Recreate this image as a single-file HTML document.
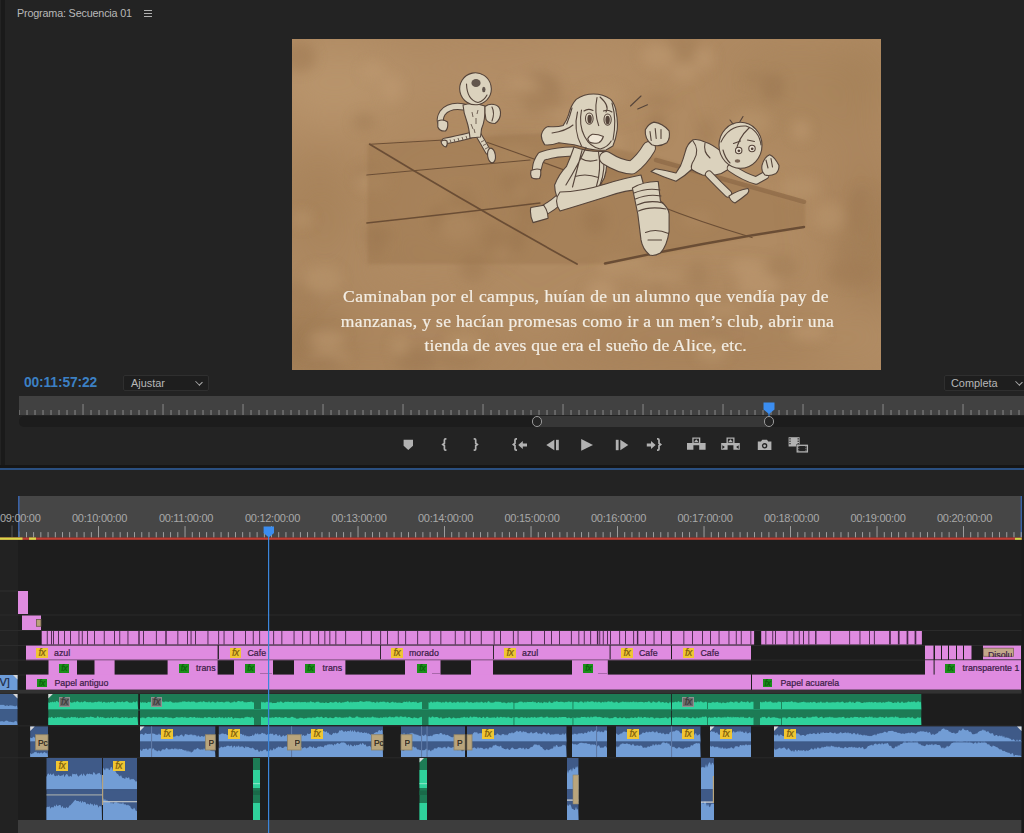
<!DOCTYPE html>
<html lang="es"><head><meta charset="utf-8"><title>Programa: Secuencia 01</title>
<style>
*{box-sizing:border-box;margin:0;padding:0}
html,body{width:1024px;height:833px;overflow:hidden;background:#232323}
body{position:relative;font-family:"Liberation Sans",sans-serif;color:#b4b4b4;font-size:11px}
.a{position:absolute}
#strip{left:1px;top:0;width:4px;height:466px;background:#1a1a1a}
#title{left:17px;top:6.8px;font-size:10.8px;color:#b9b9b9;white-space:nowrap;letter-spacing:-0.18px}
#burger{left:144px;top:10px;width:8px;height:7px}
#burger i{display:block;height:1px;background:#b0b0b0;margin-bottom:2px}
#frame{left:292px;top:39px;width:589px;height:331px;background:#ab8760;overflow:hidden}
#sub{left:0;top:246.4px;width:589px;text-align:center;font-family:"Liberation Serif",serif;color:#f3eee5;font-size:16.4px;line-height:24.3px;white-space:nowrap;-webkit-text-stroke:.2px}
#sub span{display:inline-block;transform:scaleX(1.07);transform-origin:50% 50%}
#tc{left:24px;top:375px;font-size:13.8px;font-weight:bold;color:#3c80c4;letter-spacing:-0.12px}
.dd{height:16px;background:#1e1e1e;border:1px solid #2f2f2f;border-radius:2px;color:#b8b8b8;font-size:10.9px;line-height:14px;white-space:nowrap}
#fit{left:123px;top:375px;width:86px;padding-left:7px}
#qual{left:944px;top:375px;width:90px;padding-left:6px}
.chev{position:absolute;top:3px;width:6px;height:6px;border-right:1.3px solid #b0b0b0;border-bottom:1.3px solid #b0b0b0;transform:rotate(45deg) scale(1,.8)}
#scrub{left:19px;top:396px;width:1005px;height:19px;background:#414141}
#zoombar{left:19px;top:416px;width:1010px;height:11px;background:#1c1c1c;border-radius:5px}
#zoomsel{left:537px;top:416px;width:232px;height:11px;background:#373737}
.ring{width:10.6px;height:10.6px;margin:.2px;border:1.9px solid #999;border-radius:50%;background:#242424}
#sep1{left:0;top:465px;width:1024px;height:3px;background:#161616}
#sep2{left:0;top:468px;width:1024px;height:1.7px;background:#2a4f80}

.tl{top:511.8px;width:59px;text-align:center;font-size:11px;color:#a9a9a9;white-space:nowrap;letter-spacing:-0.28px}
.fx{width:11.8px;height:9.8px;font-size:10px;line-height:9.4px;font-style:italic;text-align:center;letter-spacing:-0.4px;overflow:hidden;-webkit-text-stroke:.2px}
.cl{font-size:8.8px;line-height:12px;color:#3a1c45;white-space:nowrap;-webkit-text-stroke:.22px}
</style></head>
<body>
<div class="a" id="strip"></div>
<div class="a" id="title">Programa: Secuencia 01</div>
<div class="a" id="burger"><i></i><i></i><i></i></div>
<div class="a" id="frame"><svg class="a" style="left:0;top:0" width="589" height="331" viewBox="292 39 589 331"><defs><filter id="bl" x="-30%" y="-30%" width="160%" height="160%"><feGaussianBlur stdDeviation="20"/></filter><filter id="b2" x="-30%" y="-30%" width="160%" height="160%"><feGaussianBlur stdDeviation="6"/></filter><filter id="b4"><feGaussianBlur stdDeviation="1.6"/></filter><filter id="b3"><feGaussianBlur stdDeviation=".45"/></filter></defs><rect x="292" y="39" width="589" height="331" fill="#b08b63"/><g filter="url(#bl)"><ellipse cx="340" cy="80" rx="70" ry="40" fill="#b9956d" opacity="0.7"/><ellipse cx="520" cy="70" rx="120" ry="30" fill="#b5916a" opacity="0.6"/><ellipse cx="800" cy="90" rx="70" ry="50" fill="#a7835c" opacity="0.6"/><ellipse cx="860" cy="200" rx="40" ry="90" fill="#a6825a" opacity="0.6"/><ellipse cx="330" cy="250" rx="50" ry="70" fill="#ab875f" opacity="0.5"/><ellipse cx="420" cy="330" rx="90" ry="40" fill="#aa865e" opacity="0.6"/><ellipse cx="700" cy="330" rx="140" ry="40" fill="#a6825a" opacity="0.6"/><ellipse cx="310" cy="350" rx="40" ry="30" fill="#9e7b54" opacity="0.6"/><ellipse cx="600" cy="60" rx="60" ry="20" fill="#b8946c" opacity="0.5"/><ellipse cx="860" cy="340" rx="50" ry="40" fill="#b28e66" opacity="0.6"/><ellipse cx="450" cy="200" rx="40" ry="30" fill="#b8946c" opacity="0.4"/><ellipse cx="865" cy="75" rx="35" ry="40" fill="#9b7750" opacity="0.35"/><ellipse cx="872" cy="250" rx="25" ry="70" fill="#98744e" opacity="0.50"/><ellipse cx="300" cy="340" rx="45" ry="40" fill="#96724c" opacity="0.50"/><ellipse cx="590" cy="366" rx="300" ry="14" fill="#9b7750" opacity="0.45"/><ellipse cx="330" cy="90" rx="60" ry="40" fill="#ba966e" opacity="0.45"/><ellipse cx="315" cy="200" rx="40" ry="50" fill="#a07c55" opacity="0.45"/><ellipse cx="560" cy="44" rx="280" ry="8" fill="#a27e57" opacity="0.40"/></g><g filter="url(#b2)" opacity=".6"><ellipse cx="658" cy="282" rx="6" ry="10" fill="#9c7852"/><ellipse cx="845" cy="252" rx="8" ry="10" fill="#a07c55"/><ellipse cx="439" cy="218" rx="10" ry="13" fill="#9c7852"/><ellipse cx="533" cy="101" rx="9" ry="14" fill="#a37f58"/><ellipse cx="376" cy="242" rx="8" ry="16" fill="#a07c55"/><ellipse cx="298" cy="293" rx="20" ry="8" fill="#a07c55"/><ellipse cx="856" cy="217" rx="9" ry="16" fill="#a07c55"/><ellipse cx="410" cy="355" rx="11" ry="9" fill="#a37f58"/><ellipse cx="392" cy="89" rx="11" ry="14" fill="#bd9971"/><ellipse cx="637" cy="235" rx="7" ry="9" fill="#b8946c"/><ellipse cx="473" cy="268" rx="14" ry="13" fill="#a07c55"/><ellipse cx="328" cy="358" rx="21" ry="9" fill="#bd9971"/><ellipse cx="531" cy="220" rx="12" ry="11" fill="#a37f58"/><ellipse cx="300" cy="57" rx="16" ry="15" fill="#a07c55"/><ellipse cx="364" cy="122" rx="12" ry="9" fill="#a37f58"/><ellipse cx="601" cy="293" rx="15" ry="14" fill="#bd9971"/><ellipse cx="509" cy="138" rx="21" ry="6" fill="#a37f58"/><ellipse cx="494" cy="240" rx="11" ry="15" fill="#a07c55"/><ellipse cx="613" cy="143" rx="11" ry="14" fill="#b8946c"/><ellipse cx="660" cy="276" rx="22" ry="7" fill="#b8946c"/><ellipse cx="323" cy="362" rx="21" ry="5" fill="#9c7852"/><ellipse cx="727" cy="153" rx="13" ry="10" fill="#b8946c"/><ellipse cx="327" cy="339" rx="19" ry="9" fill="#bd9971"/><ellipse cx="416" cy="360" rx="21" ry="12" fill="#9c7852"/><ellipse cx="754" cy="77" rx="12" ry="6" fill="#a37f58"/><ellipse cx="540" cy="88" rx="20" ry="16" fill="#9c7852"/><ellipse cx="559" cy="200" rx="14" ry="8" fill="#b8946c"/><ellipse cx="530" cy="89" rx="19" ry="11" fill="#a37f58"/><ellipse cx="400" cy="346" rx="9" ry="10" fill="#b8946c"/><ellipse cx="595" cy="220" rx="12" ry="14" fill="#9c7852"/><ellipse cx="747" cy="267" rx="18" ry="9" fill="#bd9971"/><ellipse cx="706" cy="133" rx="10" ry="16" fill="#a37f58"/><ellipse cx="712" cy="352" rx="16" ry="11" fill="#b8946c"/><ellipse cx="302" cy="219" rx="11" ry="8" fill="#b8946c"/><ellipse cx="463" cy="204" rx="12" ry="12" fill="#b8946c"/><ellipse cx="725" cy="310" rx="21" ry="7" fill="#b8946c"/><ellipse cx="800" cy="188" rx="21" ry="11" fill="#b8946c"/><ellipse cx="604" cy="96" rx="21" ry="10" fill="#b8946c"/><ellipse cx="698" cy="275" rx="9" ry="14" fill="#a37f58"/><ellipse cx="634" cy="258" rx="11" ry="11" fill="#a37f58"/><ellipse cx="801" cy="130" rx="9" ry="11" fill="#bd9971"/><ellipse cx="659" cy="101" rx="16" ry="5" fill="#a07c55"/><ellipse cx="570" cy="115" rx="20" ry="6" fill="#bd9971"/><ellipse cx="859" cy="198" rx="7" ry="10" fill="#9c7852"/><ellipse cx="517" cy="240" rx="9" ry="13" fill="#9c7852"/><ellipse cx="513" cy="156" rx="20" ry="15" fill="#b8946c"/><ellipse cx="697" cy="219" rx="15" ry="8" fill="#bd9971"/><ellipse cx="467" cy="208" rx="11" ry="9" fill="#9c7852"/><ellipse cx="370" cy="175" rx="16" ry="9" fill="#9c7852"/><ellipse cx="378" cy="235" rx="14" ry="7" fill="#9c7852"/><ellipse cx="373" cy="71" rx="12" ry="9" fill="#bd9971"/><ellipse cx="829" cy="217" rx="16" ry="15" fill="#b8946c"/><ellipse cx="514" cy="182" rx="14" ry="10" fill="#a07c55"/><ellipse cx="708" cy="166" rx="16" ry="8" fill="#a07c55"/><ellipse cx="867" cy="203" rx="6" ry="15" fill="#a37f58"/><ellipse cx="474" cy="343" rx="14" ry="6" fill="#a07c55"/><ellipse cx="657" cy="186" rx="7" ry="7" fill="#b8946c"/><ellipse cx="524" cy="198" rx="10" ry="15" fill="#9c7852"/><ellipse cx="751" cy="122" rx="20" ry="13" fill="#b8946c"/><ellipse cx="462" cy="201" rx="14" ry="14" fill="#a37f58"/><ellipse cx="808" cy="332" rx="18" ry="8" fill="#bd9971"/><ellipse cx="606" cy="151" rx="18" ry="5" fill="#b8946c"/><ellipse cx="499" cy="263" rx="8" ry="5" fill="#9c7852"/><ellipse cx="618" cy="264" rx="20" ry="11" fill="#bd9971"/><ellipse cx="303" cy="294" rx="16" ry="13" fill="#a37f58"/><ellipse cx="851" cy="252" rx="14" ry="13" fill="#a37f58"/><ellipse cx="715" cy="333" rx="19" ry="6" fill="#a37f58"/><ellipse cx="783" cy="267" rx="15" ry="12" fill="#a37f58"/><ellipse cx="570" cy="143" rx="14" ry="11" fill="#a07c55"/><ellipse cx="585" cy="149" rx="13" ry="11" fill="#a07c55"/><ellipse cx="323" cy="279" rx="19" ry="14" fill="#b8946c"/><ellipse cx="682" cy="50" rx="22" ry="16" fill="#a37f58"/><ellipse cx="704" cy="58" rx="10" ry="12" fill="#bd9971"/><ellipse cx="850" cy="273" rx="22" ry="13" fill="#a07c55"/><ellipse cx="550" cy="101" rx="13" ry="7" fill="#a07c55"/><ellipse cx="658" cy="56" rx="17" ry="13" fill="#bd9971"/><ellipse cx="458" cy="227" rx="18" ry="15" fill="#bd9971"/><ellipse cx="373" cy="182" rx="17" ry="10" fill="#b8946c"/><ellipse cx="501" cy="255" rx="8" ry="8" fill="#bd9971"/><ellipse cx="627" cy="262" rx="21" ry="11" fill="#b8946c"/><ellipse cx="657" cy="127" rx="10" ry="14" fill="#9c7852"/><ellipse cx="460" cy="358" rx="20" ry="10" fill="#a07c55"/><ellipse cx="522" cy="85" rx="16" ry="6" fill="#bd9971"/><ellipse cx="684" cy="72" rx="14" ry="10" fill="#bd9971"/><ellipse cx="522" cy="192" rx="8" ry="11" fill="#b8946c"/><ellipse cx="611" cy="167" rx="21" ry="10" fill="#a07c55"/><ellipse cx="758" cy="285" rx="22" ry="12" fill="#bd9971"/><ellipse cx="773" cy="87" rx="12" ry="14" fill="#9c7852"/><ellipse cx="464" cy="343" rx="19" ry="9" fill="#b8946c"/><ellipse cx="716" cy="158" rx="19" ry="10" fill="#b8946c"/></g><path d="M367.5 144.3L544 133L654 157L805 201.8L805 226L605.5 264L367.5 264Z" fill="#9a744d" opacity=".43" filter="url(#b4)"/><g fill="none" stroke="#6b4e35" stroke-linecap="round" filter="url(#b3)"><path d="M369.7 144.3Q470 205 577 264" stroke-width="1.8"/><path d="M605 263.5Q700 243 804 227" stroke-width="2.5"/><path d="M366.8 175Q440 168 530 160" stroke-width="1.2"/><path d="M366.8 223Q450 214 540 203" stroke-width="1.3"/><path d="M487.6 142.5Q560 168 612 188M660 206Q700 222 752 237.5" stroke-width="1.3"/><path d="M369.7 144.3L470 138.5" stroke-width="1"/><path d="M656 160Q730 181 804 201.8" stroke-width="4.5" stroke="#8c6846" opacity=".7"/></g><g><path d="M470 135.5Q456 139 445 141" fill="none" stroke="#55443a" stroke-width="6.8" stroke-linecap="round" stroke-linejoin="round"/><path d="M470 135.5Q456 139 445 141" fill="none" stroke="#dbd2bd" stroke-width="4.8" stroke-linecap="round" stroke-linejoin="round"/><path d="M441 141.5Q444 139 447 141Q448 145 446 147Q442 146 441 141.5Z" fill="#dbd2bd" stroke="#55443a" stroke-width="1.1" stroke-linejoin="round" stroke-linecap="round"/><path d="M478.5 135Q484 144 488 151.5" fill="none" stroke="#55443a" stroke-width="6.4" stroke-linecap="round" stroke-linejoin="round"/><path d="M478.5 135Q484 144 488 151.5" fill="none" stroke="#dbd2bd" stroke-width="4.4" stroke-linecap="round" stroke-linejoin="round"/><ellipse cx="491.5" cy="155.5" rx="3.9" ry="7.4" transform="rotate(-8 491.5 155.5)" fill="#dbd2bd" stroke="#55443a" stroke-width="1.1" stroke-linejoin="round" stroke-linecap="round"/><path d="M464 107Q449 104.5 442.5 113Q439.5 118 440.5 122" fill="none" stroke="#55443a" stroke-width="7.2" stroke-linecap="round" stroke-linejoin="round"/><path d="M464 107Q449 104.5 442.5 113Q439.5 118 440.5 122" fill="none" stroke="#dbd2bd" stroke-width="5.2" stroke-linecap="round" stroke-linejoin="round"/><path d="M437.8 121Q443 118.5 447.6 122Q448.5 128 445.5 131Q439.5 131.5 437.8 127Z" fill="#dbd2bd" stroke="#55443a" stroke-width="1.1" stroke-linejoin="round" stroke-linecap="round"/><path d="M463 105Q473 102 485 106Q485.5 120 481.5 129Q481 134 480.5 137L470 138Q469 128 467 122Q463.5 113 463 105Z" fill="#dbd2bd" stroke="#55443a" stroke-width="1.1" stroke-linejoin="round" stroke-linecap="round"/><path d="M472 112l1 5M476 118l0 6M471 124l2 5M478 110l-1 4M474 129l1 4" fill="none" stroke="#55443a" stroke-width=".8"/><path d="M485 106.5Q489 103.5 494 104.5Q500 105.5 500.5 112Q501 119.5 495 123.5Q488.5 123.5 486 119.5Q484.5 113 485 106.5Z" fill="#dbd2bd" stroke="#55443a" stroke-width="1.1" stroke-linejoin="round" stroke-linecap="round"/><path d="M492 107Q495 113 492 121" fill="none" stroke="#55443a" stroke-width="1.1" stroke-linejoin="round" stroke-linecap="round"/><ellipse cx="475.5" cy="88.8" rx="15.8" ry="16" transform="rotate(-12 475.5 88.8)" fill="#dbd2bd" stroke="#55443a" stroke-width="1.1" stroke-linejoin="round" stroke-linecap="round"/><ellipse cx="476" cy="83" rx="4.6" ry="4" fill="#62564d"/><ellipse cx="483.8" cy="89.5" rx="1.7" ry="2.8" fill="#62564d"/><path d="M466.5 84Q467 100 478 102.5Q484 101 487 95" fill="none" stroke="#55443a" stroke-width="1.1" stroke-linejoin="round" stroke-linecap="round"/><path d="M450 139.5l1 3M454 139l1 3M458 138l1 3M462 137l1 3M466 136l1 3M481 142l3-1.5M483 145.5l3-1.5M485 149l3-1.5" stroke="#55443a" stroke-width=".8" fill="none"/></g><g><path d="M721.3 151.6Q712 144 705.6 142.2Q698 138.5 693.1 139.8Q687 144 685.3 151.6Q683 160 680.6 165.6L676 173Q665 170 655.6 168.8L651 171.5Q663 177 676 181.3Q685 176 691.6 169.5Q697 173 702.5 175Q713 176 721.3 173.4L731.5 167.5Q728 158 721.3 151.6Z" fill="#dbd2bd" stroke="#55443a" stroke-width="1.1" stroke-linejoin="round" stroke-linecap="round"/><path d="M693 141Q700 150 694 160Q690 166 692 170M705 143Q703 152 710 158" fill="none" stroke="#55443a" stroke-width="1.1" stroke-linejoin="round" stroke-linecap="round"/><path d="M709 174.5Q719 185 728 193.5" fill="none" stroke="#55443a" stroke-width="8.0" stroke-linecap="round" stroke-linejoin="round"/><path d="M709 174.5Q719 185 728 193.5" fill="none" stroke="#dbd2bd" stroke-width="6.0" stroke-linecap="round" stroke-linejoin="round"/><path d="M729 196Q738 190 748 188.5Q750 191 747 194Q741 199 735 203Q730 201 729 196Z" fill="#dbd2bd" stroke="#55443a" stroke-width="1.1" stroke-linejoin="round" stroke-linecap="round"/><path d="M731 168Q744 177 756 180.5L765 175.5" fill="none" stroke="#55443a" stroke-width="8.5" stroke-linecap="round" stroke-linejoin="round"/><path d="M731 168Q744 177 756 180.5L765 175.5" fill="none" stroke="#dbd2bd" stroke-width="6.5" stroke-linecap="round" stroke-linejoin="round"/><path d="M761.9 165.6Q764 157 769.7 154.7Q775 157 779 165.6Q779 171 776 173.4Q770 176.5 765 175Q761 171 761.9 165.6Z" fill="#dbd2bd" stroke="#55443a" stroke-width="1.1" stroke-linejoin="round" stroke-linecap="round"/><path d="M766 160l2 8M771 158.5l1.5 8.5" fill="none" stroke="#55443a" stroke-width="1.1" stroke-linejoin="round" stroke-linecap="round"/><ellipse cx="740.5" cy="145.3" rx="21.5" ry="23" fill="#dbd2bd" stroke="#55443a" stroke-width="1.1" stroke-linejoin="round" stroke-linecap="round"/><path d="M721 142Q729 125 746 126Q759 130 761 145M749 128Q738 138 736 152M730 120l3 4M743 116.5l-3 5M723 150Q725 158 730 163" fill="none" stroke="#55443a" stroke-width="1.1" stroke-linejoin="round" stroke-linecap="round"/><circle cx="738.7" cy="150.5" r="3.2" fill="#efe6d6" stroke="#55443a" stroke-width="1.1" stroke-linejoin="round" stroke-linecap="round"/><circle cx="738.9" cy="150.8" r="1.4" fill="#55443a"/><circle cx="752" cy="148.5" r="3.2" fill="#efe6d6" stroke="#55443a" stroke-width="1.1" stroke-linejoin="round" stroke-linecap="round"/><circle cx="752.2" cy="148.8" r="1.4" fill="#55443a"/><ellipse cx="737.5" cy="161" rx="2.8" ry="1.8" fill="#7b6656"/><path d="M733.5 143.5l7-2.5M747.5 140l7 1.5" fill="none" stroke="#55443a" stroke-width="1.1" stroke-linejoin="round" stroke-linecap="round"/></g><g><path d="M561 198Q552 206 543 211" fill="none" stroke="#55443a" stroke-width="11.0" stroke-linecap="round" stroke-linejoin="round"/><path d="M561 198Q552 206 543 211" fill="none" stroke="#dbd2bd" stroke-width="9.0" stroke-linecap="round" stroke-linejoin="round"/><path d="M530.8 207.5L543.8 205.3Q548 211 548.1 218.3L533 222.6Q529.5 215 530.8 207.5Z" fill="#dbd2bd" stroke="#55443a" stroke-width="1.1" stroke-linejoin="round" stroke-linecap="round"/><path d="M573 151.5Q553 152 541.5 156.5Q537.5 162 537 168" fill="none" stroke="#55443a" stroke-width="10.0" stroke-linecap="round" stroke-linejoin="round"/><path d="M573 151.5Q553 152 541.5 156.5Q537.5 162 537 168" fill="none" stroke="#dbd2bd" stroke-width="8.0" stroke-linecap="round" stroke-linejoin="round"/><path d="M531 170.5Q536 168 540.5 169.5Q541.5 175 539.5 178.5Q534 179.5 531.5 177.5Q530 174 531 170.5Z" fill="#dbd2bd" stroke="#55443a" stroke-width="1.1" stroke-linejoin="round" stroke-linecap="round"/><path d="M593.5 94Q603 94 610.8 99.4Q615.5 105 616.2 112.4Q618 121 617.2 129.7Q616 139 612.9 146L606 150Q593 151 582.7 147L574 144.8Q566 143.5 558.9 142.7Q551 145.5 544.8 144.8Q540.5 139 541.6 134Q543.5 128 548.1 126.5Q557 127.5 563.2 125.4Q567 120 568.6 114.6Q571 105 576.2 99.4Q584 94 593.5 94Z" fill="#dbd2bd" stroke="#55443a" stroke-width="1.1" stroke-linejoin="round" stroke-linecap="round"/><path d="M574 147Q590 152.5 605.3 151.3Q608.5 165 604.3 178Q600 186 595.6 190L562 204Q555 198 554.6 185Q559 174 566.5 166.4Q571 156 574 147Z" fill="#dbd2bd" stroke="#55443a" stroke-width="1.1" stroke-linejoin="round" stroke-linecap="round"/><path d="M586 147.4Q578 165 565.9 185M582 150.5L572.5 187M598.5 152Q601.5 170 596.5 186M603 152Q606 170 600 185M575 176.5Q586 173 598.5 177.5M580 158Q588 163 597 160" fill="none" stroke="#55443a" stroke-width="1.1" stroke-linejoin="round" stroke-linecap="round"/><path d="M560 192Q580 192 606.4 183.7Q625 178 641 175L645 190Q632 188 606.4 196.7Q580 205 560 211Q553 201 560 192Z" fill="#dbd2bd" stroke="#55443a" stroke-width="1.1" stroke-linejoin="round" stroke-linecap="round"/><path d="M632.4 188Q645 181 658.3 181.6L660.4 201Q669 208 669.1 214L669.1 231.3Q667 246 660.4 252.9Q654 256.5 649.6 255Q642.5 249 641 239.9L637.8 214Z" fill="#dbd2bd" stroke="#55443a" stroke-width="1.1" stroke-linejoin="round" stroke-linecap="round"/><path d="M634 193Q647 187.5 660 190M635.5 199Q648 193.5 661 196M637 205Q649 199.5 663 203M638.5 211Q650 206 666 209M648 240h13.5M645.5 232.5Q656 228 668.5 233.5" fill="none" stroke="#55443a" stroke-width="1.1" stroke-linejoin="round" stroke-linecap="round"/><path d="M606 158Q620 167 632 167.5Q642 160 649 148" fill="none" stroke="#55443a" stroke-width="14.0" stroke-linecap="round" stroke-linejoin="round"/><path d="M606 158Q620 167 632 167.5Q642 160 649 148" fill="none" stroke="#dbd2bd" stroke-width="12.0" stroke-linecap="round" stroke-linejoin="round"/><path d="M645.3 129.7Q648.5 123.5 654 122.1Q663 123.5 669.1 130.8Q670.5 138 666.9 142.7Q659 147.5 651.8 144.8Q644.5 139 645.3 129.7Z" fill="#dbd2bd" stroke="#55443a" stroke-width="1.1" stroke-linejoin="round" stroke-linecap="round"/><path d="M650 131.5l1.2 9M655.2 128.5l1 10M661 129.5l0 9" fill="none" stroke="#55443a" stroke-width="1.1" stroke-linejoin="round" stroke-linecap="round"/><path d="M597 97.5Q594 112 598.7 125.6M600 97Q610 106 606 112M581.5 110Q578.5 125 584.6 136.5Q590 147 600.2 149Q608 147 611.2 141M577.5 112Q573 130 581.5 146M573 125Q566 131 552 133M566.7 124Q570 116 572 108M612 103Q617 120 613 140" fill="none" stroke="#55443a" stroke-width="1.1" stroke-linejoin="round" stroke-linecap="round"/><ellipse cx="589.3" cy="118.6" rx="3.8" ry="5.6" fill="#e6dcc8" stroke="#55443a" stroke-width="1.1" stroke-linejoin="round" stroke-linecap="round"/><ellipse cx="607.6" cy="119.6" rx="3.6" ry="5.6" fill="#e6dcc8" stroke="#55443a" stroke-width="1.1" stroke-linejoin="round" stroke-linecap="round"/><ellipse cx="589.6" cy="119" rx="2.2" ry="4.2" fill="#55443a"/><ellipse cx="607.6" cy="120" rx="2.2" ry="4.2" fill="#55443a"/><path d="M584 111Q588 108 593 110.5M603.5 111Q608 109 612 112" fill="none" stroke="#55443a" stroke-width="1.1" stroke-linejoin="round" stroke-linecap="round"/><path d="M587.7 138.8Q589.5 135 592.4 134.2Q598 134 603.4 136.5Q602 141 598.7 142.7Q593 144 589.3 142Z" fill="#eee5d5" stroke="#55443a" stroke-width="1.1" stroke-linejoin="round" stroke-linecap="round"/><path d="M630.5 106L641 96M637.7 109L647.5 104.8" fill="none" stroke="#55443a" stroke-width="1.1" stroke-linejoin="round" stroke-linecap="round"/></g></svg><div class="a" id="sub"><span style="letter-spacing:.37px;margin-left:-1px">Caminaban por el campus, huían de un alumno que vendía pay de</span><br><span style="letter-spacing:.315px;margin-left:2.5px">manzanas, y se hacían promesas como ir a un men’s club, abrir una</span><br><span style="letter-spacing:.19px;margin-left:-2.5px">tienda de aves que era el sueño de Alice, etc.</span></div></div>
<div class="a" id="tc">00:11:57:22</div>
<div class="a dd" id="fit">Ajustar<span class="chev" style="left:72px"></span></div>
<div class="a dd" id="qual">Completa<span class="chev" style="left:71px"></span></div>
<div class="a" id="scrub"><svg width="1005" height="19" fill="#969696"><rect x="-16.40" y="8" width=".85" height="11"/><rect x="-8.40" y="14" width=".85" height="5"/><rect x="-0.40" y="14" width=".85" height="5"/><rect x="7.60" y="14" width=".85" height="5"/><rect x="15.60" y="14" width=".85" height="5"/><rect x="23.60" y="14" width=".85" height="5"/><rect x="31.60" y="14" width=".85" height="5"/><rect x="39.60" y="14" width=".85" height="5"/><rect x="47.60" y="14" width=".85" height="5"/><rect x="55.60" y="14" width=".85" height="5"/><rect x="63.60" y="8" width=".85" height="11"/><rect x="71.60" y="14" width=".85" height="5"/><rect x="79.60" y="14" width=".85" height="5"/><rect x="87.60" y="14" width=".85" height="5"/><rect x="95.60" y="14" width=".85" height="5"/><rect x="103.60" y="14" width=".85" height="5"/><rect x="111.60" y="14" width=".85" height="5"/><rect x="119.60" y="14" width=".85" height="5"/><rect x="127.60" y="14" width=".85" height="5"/><rect x="135.60" y="14" width=".85" height="5"/><rect x="143.60" y="8" width=".85" height="11"/><rect x="151.60" y="14" width=".85" height="5"/><rect x="159.60" y="14" width=".85" height="5"/><rect x="167.60" y="14" width=".85" height="5"/><rect x="175.60" y="14" width=".85" height="5"/><rect x="183.60" y="14" width=".85" height="5"/><rect x="191.60" y="14" width=".85" height="5"/><rect x="199.60" y="14" width=".85" height="5"/><rect x="207.60" y="14" width=".85" height="5"/><rect x="215.60" y="14" width=".85" height="5"/><rect x="223.60" y="8" width=".85" height="11"/><rect x="231.60" y="14" width=".85" height="5"/><rect x="239.60" y="14" width=".85" height="5"/><rect x="247.60" y="14" width=".85" height="5"/><rect x="255.60" y="14" width=".85" height="5"/><rect x="263.60" y="14" width=".85" height="5"/><rect x="271.60" y="14" width=".85" height="5"/><rect x="279.60" y="14" width=".85" height="5"/><rect x="287.60" y="14" width=".85" height="5"/><rect x="295.60" y="14" width=".85" height="5"/><rect x="303.60" y="8" width=".85" height="11"/><rect x="311.60" y="14" width=".85" height="5"/><rect x="319.60" y="14" width=".85" height="5"/><rect x="327.60" y="14" width=".85" height="5"/><rect x="335.60" y="14" width=".85" height="5"/><rect x="343.60" y="14" width=".85" height="5"/><rect x="351.60" y="14" width=".85" height="5"/><rect x="359.60" y="14" width=".85" height="5"/><rect x="367.60" y="14" width=".85" height="5"/><rect x="375.60" y="14" width=".85" height="5"/><rect x="383.60" y="8" width=".85" height="11"/><rect x="391.60" y="14" width=".85" height="5"/><rect x="399.60" y="14" width=".85" height="5"/><rect x="407.60" y="14" width=".85" height="5"/><rect x="415.60" y="14" width=".85" height="5"/><rect x="423.60" y="14" width=".85" height="5"/><rect x="431.60" y="14" width=".85" height="5"/><rect x="439.60" y="14" width=".85" height="5"/><rect x="447.60" y="14" width=".85" height="5"/><rect x="455.60" y="14" width=".85" height="5"/><rect x="463.60" y="8" width=".85" height="11"/><rect x="471.60" y="14" width=".85" height="5"/><rect x="479.60" y="14" width=".85" height="5"/><rect x="487.60" y="14" width=".85" height="5"/><rect x="495.60" y="14" width=".85" height="5"/><rect x="503.60" y="14" width=".85" height="5"/><rect x="511.60" y="14" width=".85" height="5"/><rect x="519.60" y="14" width=".85" height="5"/><rect x="527.60" y="14" width=".85" height="5"/><rect x="535.60" y="14" width=".85" height="5"/><rect x="543.60" y="8" width=".85" height="11"/><rect x="551.60" y="14" width=".85" height="5"/><rect x="559.60" y="14" width=".85" height="5"/><rect x="567.60" y="14" width=".85" height="5"/><rect x="575.60" y="14" width=".85" height="5"/><rect x="583.60" y="14" width=".85" height="5"/><rect x="591.60" y="14" width=".85" height="5"/><rect x="599.60" y="14" width=".85" height="5"/><rect x="607.60" y="14" width=".85" height="5"/><rect x="615.60" y="14" width=".85" height="5"/><rect x="623.60" y="8" width=".85" height="11"/><rect x="631.60" y="14" width=".85" height="5"/><rect x="639.60" y="14" width=".85" height="5"/><rect x="647.60" y="14" width=".85" height="5"/><rect x="655.60" y="14" width=".85" height="5"/><rect x="663.60" y="14" width=".85" height="5"/><rect x="671.60" y="14" width=".85" height="5"/><rect x="679.60" y="14" width=".85" height="5"/><rect x="687.60" y="14" width=".85" height="5"/><rect x="695.60" y="14" width=".85" height="5"/><rect x="703.60" y="8" width=".85" height="11"/><rect x="711.60" y="14" width=".85" height="5"/><rect x="719.60" y="14" width=".85" height="5"/><rect x="727.60" y="14" width=".85" height="5"/><rect x="735.60" y="14" width=".85" height="5"/><rect x="743.60" y="14" width=".85" height="5"/><rect x="751.60" y="14" width=".85" height="5"/><rect x="759.60" y="14" width=".85" height="5"/><rect x="767.60" y="14" width=".85" height="5"/><rect x="775.60" y="14" width=".85" height="5"/><rect x="783.60" y="8" width=".85" height="11"/><rect x="791.60" y="14" width=".85" height="5"/><rect x="799.60" y="14" width=".85" height="5"/><rect x="807.60" y="14" width=".85" height="5"/><rect x="815.60" y="14" width=".85" height="5"/><rect x="823.60" y="14" width=".85" height="5"/><rect x="831.60" y="14" width=".85" height="5"/><rect x="839.60" y="14" width=".85" height="5"/><rect x="847.60" y="14" width=".85" height="5"/><rect x="855.60" y="14" width=".85" height="5"/><rect x="863.60" y="8" width=".85" height="11"/><rect x="871.60" y="14" width=".85" height="5"/><rect x="879.60" y="14" width=".85" height="5"/><rect x="887.60" y="14" width=".85" height="5"/><rect x="895.60" y="14" width=".85" height="5"/><rect x="903.60" y="14" width=".85" height="5"/><rect x="911.60" y="14" width=".85" height="5"/><rect x="919.60" y="14" width=".85" height="5"/><rect x="927.60" y="14" width=".85" height="5"/><rect x="935.60" y="14" width=".85" height="5"/><rect x="943.60" y="8" width=".85" height="11"/><rect x="951.60" y="14" width=".85" height="5"/><rect x="959.60" y="14" width=".85" height="5"/><rect x="967.60" y="14" width=".85" height="5"/><rect x="975.60" y="14" width=".85" height="5"/><rect x="983.60" y="14" width=".85" height="5"/><rect x="991.60" y="14" width=".85" height="5"/><rect x="999.60" y="14" width=".85" height="5"/><rect x="1007.60" y="14" width=".85" height="5"/></svg></div>
<div class="a" id="zoombar"></div><div class="a" id="zoomsel"></div>
<div class="a ring" style="left:531.5px;top:416px"></div><div class="a ring" style="left:763.5px;top:416px"></div>
<svg class="a" style="left:762px;top:401px" width="14" height="15"><path d="M1.5 1.5h11v7l-5.5 4.5l-5.5-4.5z" fill="#3b8df0"/><rect x="6.5" y="12" width="1" height="3" fill="#3b8df0"/></svg>
<svg class="a" style="left:400px;top:434px" width="412" height="22" viewBox="400 434 412 22" fill="#b2b2b2"><path d="M403.6 439.8h9.4v6l-4.7 4.2l-4.7-4.2z"/><path d="M446.4 438.9h-.8q-1.2 0 -1.2 1.2v3.2l-1.6 1.2l1.6 1.2v3.2q0 1.2 1.2 1.2h.8" fill="none" stroke="#b2b2b2" stroke-width="1.7"/><path d="M473.7 438.9h.8q1.2 0 1.2 1.2v3.2l1.6 1.2l-1.6 1.2v3.2q0 1.2 -1.2 1.2h-.8" fill="none" stroke="#b2b2b2" stroke-width="1.7"/><path d="M517.0 438.9h-.8q-1.2 0 -1.2 1.2v3.2l-1.6 1.2l1.6 1.2v3.2q0 1.2 1.2 1.2h.8" fill="none" stroke="#b2b2b2" stroke-width="1.7"/><path d="M518.2 445l4.6-4v2.6h4.2v2.8h-4.2v2.6z"/><path d="M546.3 445l8-5.2v10.4z"/><rect x="556" y="439.8" width="2.8" height="10.4"/><path d="M581.2 439v11.8l11.8-5.9z"/><rect x="615.8" y="439.8" width="2.8" height="10.4"/><path d="M628.3 445l-8-5.2v10.4z"/><path d="M655.6 445l-4.6-4v2.6h-4.2v2.8h4.2v2.6z"/><path d="M657.0 438.9h.8q1.2 0 1.2 1.2v3.2l1.6 1.2l-1.6 1.2v3.2q0 1.2 -1.2 1.2h-.8" fill="none" stroke="#b2b2b2" stroke-width="1.7"/><g transform="translate(0 -.5)"><path d="M687 443.5h5.3v-5.6h8v5.6h5.3v6.7h-6.4v-4.5h-5.8v4.5h-6.4z"/><path d="M693.6 439.2h5.4v4h-5.4z" fill="#232323"/><path d="M696.3 439.8l2.2 2.6h-4.4z"/></g><g transform="translate(0 -.5)"><path d="M721.2 443.5h5.3v-5.6h8v5.6h5.3v6.7h-6.4v-4.5h-5.8v4.5h-6.4z"/><path d="M727.8 439.2h5.4v4h-5.4z" fill="#232323"/><path d="M730.5 439.8l2.2 2.6h-4.4z"/></g><path d="M722.3 445.2l2.6 1.9l-2.6 1.9zM738.7 445.2l-2.6 1.9l2.6 1.9z" fill="#232323"/><path d="M757.8 441.6h3.2l1.2-1.8h4.8l1.2 1.8h3.2v8.5h-13.6z"/><circle cx="764.6" cy="445.8" r="2.7" fill="#232323"/><circle cx="764.6" cy="445.8" r="1.4"/><rect x="788.6" y="437.2" width="11" height="9.3"/><g fill="#232323"><rect x="789.4" y="438.2" width="1.2" height="1.3"/><rect x="789.4" y="440.6" width="1.2" height="1.3"/><rect x="789.4" y="443" width="1.2" height="1.3"/><rect x="797.6" y="438.2" width="1.2" height="1.3"/><rect x="797.6" y="440.6" width="1.2" height="1.3"/><rect x="797.6" y="443" width="1.2" height="1.3"/></g><rect x="796.2" y="444.3" width="11.6" height="8" fill="#232323"/><rect x="797.2" y="445.3" width="10.2" height="6.6" fill="none" stroke="#b2b2b2" stroke-width="1.3"/><g fill="#b2b2b2" opacity=".75"><rect x="798.2" y="446.2" width="1" height="1"/><rect x="798.2" y="448.2" width="1" height="1"/><rect x="798.2" y="450.2" width="1" height="1"/><rect x="805.4" y="446.2" width="1" height="1"/><rect x="805.4" y="448.2" width="1" height="1"/><rect x="805.4" y="450.2" width="1" height="1"/></g></svg>
<div class="a" id="sep1"></div><div class="a" id="sep2"></div>
<svg class="a" style="left:0;top:470px" width="1024" height="363" viewBox="0 470 1024 363"><rect x="0.0" y="470.0" width="1024.0" height="363.0" fill="#232323"/><rect x="18.0" y="540.0" width="1004.0" height="280.0" fill="#1d1d1d"/><rect x="0.0" y="540.0" width="18.0" height="293.0" fill="#222222"/><rect x="18.0" y="496.0" width="1004.0" height="41.5" fill="#464646"/><rect x="18.0" y="496.0" width="1.6" height="41.0" fill="#3b62a6"/><rect x="1020.6" y="496.0" width="1.4" height="41.5" fill="#3b62a6"/><g fill="#adadad"><rect x="11.5" y="525.5" width="1" height="11.5" opacity=".35"/><rect x="18.7" y="531.5" width="1" height="5.5" opacity=".35"/><rect x="26.02" y="532.1" width=".85" height="5.5"/><rect x="33.23" y="532.1" width=".85" height="5.5"/><rect x="40.43" y="532.1" width=".85" height="5.5"/><rect x="47.64" y="532.1" width=".85" height="5.5"/><rect x="54.85" y="532.1" width=".85" height="5.5"/><rect x="62.06" y="532.1" width=".85" height="5.5"/><rect x="69.27" y="532.1" width=".85" height="5.5"/><rect x="76.47" y="532.1" width=".85" height="5.5"/><rect x="83.68" y="532.1" width=".85" height="5.5"/><rect x="90.89" y="532.1" width=".85" height="5.5"/><rect x="98.10" y="526.1" width=".85" height="11.5"/><rect x="105.31" y="532.1" width=".85" height="5.5"/><rect x="112.52" y="532.1" width=".85" height="5.5"/><rect x="119.72" y="532.1" width=".85" height="5.5"/><rect x="126.93" y="532.1" width=".85" height="5.5"/><rect x="134.14" y="532.1" width=".85" height="5.5"/><rect x="141.35" y="532.1" width=".85" height="5.5"/><rect x="148.56" y="532.1" width=".85" height="5.5"/><rect x="155.77" y="532.1" width=".85" height="5.5"/><rect x="162.97" y="532.1" width=".85" height="5.5"/><rect x="170.18" y="532.1" width=".85" height="5.5"/><rect x="177.39" y="532.1" width=".85" height="5.5"/><rect x="184.60" y="526.1" width=".85" height="11.5"/><rect x="191.81" y="532.1" width=".85" height="5.5"/><rect x="199.02" y="532.1" width=".85" height="5.5"/><rect x="206.23" y="532.1" width=".85" height="5.5"/><rect x="213.43" y="532.1" width=".85" height="5.5"/><rect x="220.64" y="532.1" width=".85" height="5.5"/><rect x="227.85" y="532.1" width=".85" height="5.5"/><rect x="235.06" y="532.1" width=".85" height="5.5"/><rect x="242.27" y="532.1" width=".85" height="5.5"/><rect x="249.48" y="532.1" width=".85" height="5.5"/><rect x="256.68" y="532.1" width=".85" height="5.5"/><rect x="263.89" y="532.1" width=".85" height="5.5"/><rect x="271.10" y="526.1" width=".85" height="11.5"/><rect x="278.31" y="532.1" width=".85" height="5.5"/><rect x="285.52" y="532.1" width=".85" height="5.5"/><rect x="292.73" y="532.1" width=".85" height="5.5"/><rect x="299.93" y="532.1" width=".85" height="5.5"/><rect x="307.14" y="532.1" width=".85" height="5.5"/><rect x="314.35" y="532.1" width=".85" height="5.5"/><rect x="321.56" y="532.1" width=".85" height="5.5"/><rect x="328.77" y="532.1" width=".85" height="5.5"/><rect x="335.97" y="532.1" width=".85" height="5.5"/><rect x="343.18" y="532.1" width=".85" height="5.5"/><rect x="350.39" y="532.1" width=".85" height="5.5"/><rect x="357.60" y="526.1" width=".85" height="11.5"/><rect x="364.81" y="532.1" width=".85" height="5.5"/><rect x="372.02" y="532.1" width=".85" height="5.5"/><rect x="379.22" y="532.1" width=".85" height="5.5"/><rect x="386.43" y="532.1" width=".85" height="5.5"/><rect x="393.64" y="532.1" width=".85" height="5.5"/><rect x="400.85" y="532.1" width=".85" height="5.5"/><rect x="408.06" y="532.1" width=".85" height="5.5"/><rect x="415.27" y="532.1" width=".85" height="5.5"/><rect x="422.47" y="532.1" width=".85" height="5.5"/><rect x="429.68" y="532.1" width=".85" height="5.5"/><rect x="436.89" y="532.1" width=".85" height="5.5"/><rect x="444.10" y="526.1" width=".85" height="11.5"/><rect x="451.31" y="532.1" width=".85" height="5.5"/><rect x="458.52" y="532.1" width=".85" height="5.5"/><rect x="465.72" y="532.1" width=".85" height="5.5"/><rect x="472.93" y="532.1" width=".85" height="5.5"/><rect x="480.14" y="532.1" width=".85" height="5.5"/><rect x="487.35" y="532.1" width=".85" height="5.5"/><rect x="494.56" y="532.1" width=".85" height="5.5"/><rect x="501.77" y="532.1" width=".85" height="5.5"/><rect x="508.97" y="532.1" width=".85" height="5.5"/><rect x="516.18" y="532.1" width=".85" height="5.5"/><rect x="523.39" y="532.1" width=".85" height="5.5"/><rect x="530.60" y="526.1" width=".85" height="11.5"/><rect x="537.81" y="532.1" width=".85" height="5.5"/><rect x="545.02" y="532.1" width=".85" height="5.5"/><rect x="552.22" y="532.1" width=".85" height="5.5"/><rect x="559.43" y="532.1" width=".85" height="5.5"/><rect x="566.64" y="532.1" width=".85" height="5.5"/><rect x="573.85" y="532.1" width=".85" height="5.5"/><rect x="581.06" y="532.1" width=".85" height="5.5"/><rect x="588.27" y="532.1" width=".85" height="5.5"/><rect x="595.47" y="532.1" width=".85" height="5.5"/><rect x="602.68" y="532.1" width=".85" height="5.5"/><rect x="609.89" y="532.1" width=".85" height="5.5"/><rect x="617.10" y="526.1" width=".85" height="11.5"/><rect x="624.31" y="532.1" width=".85" height="5.5"/><rect x="631.52" y="532.1" width=".85" height="5.5"/><rect x="638.73" y="532.1" width=".85" height="5.5"/><rect x="645.93" y="532.1" width=".85" height="5.5"/><rect x="653.14" y="532.1" width=".85" height="5.5"/><rect x="660.35" y="532.1" width=".85" height="5.5"/><rect x="667.56" y="532.1" width=".85" height="5.5"/><rect x="674.77" y="532.1" width=".85" height="5.5"/><rect x="681.98" y="532.1" width=".85" height="5.5"/><rect x="689.18" y="532.1" width=".85" height="5.5"/><rect x="696.39" y="532.1" width=".85" height="5.5"/><rect x="703.60" y="526.1" width=".85" height="11.5"/><rect x="710.81" y="532.1" width=".85" height="5.5"/><rect x="718.02" y="532.1" width=".85" height="5.5"/><rect x="725.23" y="532.1" width=".85" height="5.5"/><rect x="732.43" y="532.1" width=".85" height="5.5"/><rect x="739.64" y="532.1" width=".85" height="5.5"/><rect x="746.85" y="532.1" width=".85" height="5.5"/><rect x="754.06" y="532.1" width=".85" height="5.5"/><rect x="761.27" y="532.1" width=".85" height="5.5"/><rect x="768.48" y="532.1" width=".85" height="5.5"/><rect x="775.68" y="532.1" width=".85" height="5.5"/><rect x="782.89" y="532.1" width=".85" height="5.5"/><rect x="790.10" y="526.1" width=".85" height="11.5"/><rect x="797.31" y="532.1" width=".85" height="5.5"/><rect x="804.52" y="532.1" width=".85" height="5.5"/><rect x="811.73" y="532.1" width=".85" height="5.5"/><rect x="818.93" y="532.1" width=".85" height="5.5"/><rect x="826.14" y="532.1" width=".85" height="5.5"/><rect x="833.35" y="532.1" width=".85" height="5.5"/><rect x="840.56" y="532.1" width=".85" height="5.5"/><rect x="847.77" y="532.1" width=".85" height="5.5"/><rect x="854.98" y="532.1" width=".85" height="5.5"/><rect x="862.18" y="532.1" width=".85" height="5.5"/><rect x="869.39" y="532.1" width=".85" height="5.5"/><rect x="876.60" y="526.1" width=".85" height="11.5"/><rect x="883.81" y="532.1" width=".85" height="5.5"/><rect x="891.02" y="532.1" width=".85" height="5.5"/><rect x="898.23" y="532.1" width=".85" height="5.5"/><rect x="905.43" y="532.1" width=".85" height="5.5"/><rect x="912.64" y="532.1" width=".85" height="5.5"/><rect x="919.85" y="532.1" width=".85" height="5.5"/><rect x="927.06" y="532.1" width=".85" height="5.5"/><rect x="934.27" y="532.1" width=".85" height="5.5"/><rect x="941.48" y="532.1" width=".85" height="5.5"/><rect x="948.68" y="532.1" width=".85" height="5.5"/><rect x="955.89" y="532.1" width=".85" height="5.5"/><rect x="963.10" y="526.1" width=".85" height="11.5"/><rect x="970.31" y="532.1" width=".85" height="5.5"/><rect x="977.52" y="532.1" width=".85" height="5.5"/><rect x="984.73" y="532.1" width=".85" height="5.5"/><rect x="991.93" y="532.1" width=".85" height="5.5"/><rect x="999.14" y="532.1" width=".85" height="5.5"/><rect x="1006.35" y="532.1" width=".85" height="5.5"/><rect x="1013.56" y="532.1" width=".85" height="5.5"/><rect x="1020.77" y="532.1" width=".85" height="5.5"/></g><rect x="0.0" y="537.5" width="1022.0" height="2.3" fill="#c03e33"/><rect x="0.0" y="537.5" width="22.5" height="2.3" fill="#d8d84a"/><rect x="29.0" y="537.5" width="7.0" height="2.3" fill="#d8d84a"/><rect x="1015.0" y="537.8" width="6.5" height="2.0" fill="#c9d64a"/><rect x="0.0" y="614.5" width="1022.0" height="1.0" fill="#2b2b2b"/><rect x="0.0" y="630.0" width="1022.0" height="1.0" fill="#2b2b2b"/><rect x="0.0" y="645.0" width="1022.0" height="1.0" fill="#2b2b2b"/><rect x="0.0" y="659.6" width="1022.0" height="1.0" fill="#2b2b2b"/><rect x="0.0" y="674.5" width="1022.0" height="1.0" fill="#2b2b2b"/><rect x="0.0" y="590.5" width="18.0" height="1.0" fill="#2e2e2e"/><rect x="0.0" y="725.4" width="1022.0" height="1.0" fill="#2a2a2a"/><rect x="0.0" y="757.3" width="1022.0" height="1.0" fill="#2a2a2a"/><rect x="0.0" y="689.8" width="1024.0" height="3.8" fill="#323232"/><rect x="18.0" y="820.0" width="1003.5" height="13.0" fill="#3d3d3d"/><rect x="1021.6" y="540.0" width="2.4" height="293.0" fill="#1a1a1a"/><rect x="18.0" y="591.0" width="10.0" height="23.0" fill="#df8be0"/><rect x="22.0" y="615.5" width="19.0" height="14.5" fill="#df8be0"/><rect x="36.4" y="619.5" width="4.6" height="6.8" fill="#b9a27a" stroke="#6b5a4a" stroke-width=".8"/><rect x="41.7" y="631.0" width="712.4" height="13.5" fill="#df8be0"/><rect x="761.2" y="631.0" width="160.7" height="13.5" fill="#df8be0"/><g fill="#452547"><rect x="46.8" y="631" width="0.9" height="13.5"/><rect x="51.0" y="631" width="0.9" height="13.5"/><rect x="53.1" y="631" width="0.9" height="13.5"/><rect x="58.1" y="631" width="0.9" height="13.5"/><rect x="64.0" y="631" width="0.9" height="13.5"/><rect x="70.0" y="631" width="0.9" height="13.5"/><rect x="78.5" y="631" width="0.9" height="13.5"/><rect x="81.8" y="631" width="0.9" height="13.5"/><rect x="87.1" y="631" width="0.9" height="13.5"/><rect x="94.0" y="631" width="0.9" height="13.5"/><rect x="103.8" y="631" width="0.9" height="13.5"/><rect x="114.0" y="631" width="0.9" height="13.5"/><rect x="119.3" y="631" width="0.9" height="13.5"/><rect x="127.5" y="631" width="0.9" height="13.5"/><rect x="138.3" y="631" width="1.4" height="13.5"/><rect x="143.0" y="631" width="0.9" height="13.5"/><rect x="155.9" y="631" width="0.9" height="13.5"/><rect x="165.3" y="631" width="1.4" height="13.5"/><rect x="177.4" y="631" width="0.9" height="13.5"/><rect x="187.1" y="631" width="0.9" height="13.5"/><rect x="190.6" y="631" width="0.9" height="13.5"/><rect x="195.0" y="631" width="0.9" height="13.5"/><rect x="207.5" y="631" width="0.9" height="13.5"/><rect x="218.2" y="631" width="0.9" height="13.5"/><rect x="223.6" y="631" width="0.9" height="13.5"/><rect x="233.2" y="631" width="0.9" height="13.5"/><rect x="245.1" y="631" width="0.9" height="13.5"/><rect x="252.8" y="631" width="0.9" height="13.5"/><rect x="259.2" y="631" width="0.9" height="13.5"/><rect x="273.2" y="631" width="0.9" height="13.5"/><rect x="281.4" y="631" width="0.9" height="13.5"/><rect x="293.6" y="631" width="0.9" height="13.5"/><rect x="302.2" y="631" width="0.9" height="13.5"/><rect x="309.8" y="631" width="0.9" height="13.5"/><rect x="318.2" y="631" width="0.9" height="13.5"/><rect x="324.4" y="631" width="0.9" height="13.5"/><rect x="329.4" y="631" width="0.9" height="13.5"/><rect x="335.4" y="631" width="0.9" height="13.5"/><rect x="345.2" y="631" width="0.9" height="13.5"/><rect x="361.2" y="631" width="0.9" height="13.5"/><rect x="370.9" y="631" width="0.9" height="13.5"/><rect x="380.2" y="631" width="0.9" height="13.5"/><rect x="387.1" y="631" width="0.9" height="13.5"/><rect x="397.8" y="631" width="0.9" height="13.5"/><rect x="405.2" y="631" width="0.9" height="13.5"/><rect x="417.2" y="631" width="0.9" height="13.5"/><rect x="429.6" y="631" width="0.9" height="13.5"/><rect x="440.4" y="631" width="0.9" height="13.5"/><rect x="454.8" y="631" width="0.9" height="13.5"/><rect x="464.4" y="631" width="0.9" height="13.5"/><rect x="469.9" y="631" width="0.9" height="13.5"/><rect x="480.8" y="631" width="0.9" height="13.5"/><rect x="493.7" y="631" width="0.9" height="13.5"/><rect x="500.1" y="631" width="0.9" height="13.5"/><rect x="512.9" y="631" width="0.9" height="13.5"/><rect x="517.6" y="631" width="0.9" height="13.5"/><rect x="531.2" y="631" width="0.9" height="13.5"/><rect x="544.1" y="631" width="0.9" height="13.5"/><rect x="551.1" y="631" width="0.9" height="13.5"/><rect x="559.1" y="631" width="0.9" height="13.5"/><rect x="570.9" y="631" width="0.9" height="13.5"/><rect x="578.4" y="631" width="0.9" height="13.5"/><rect x="583.8" y="631" width="0.9" height="13.5"/><rect x="590.2" y="631" width="0.9" height="13.5"/><rect x="596.9" y="631" width="1.4" height="13.5"/><rect x="599.3" y="631" width="0.9" height="13.5"/><rect x="602.8" y="631" width="0.9" height="13.5"/><rect x="607.0" y="631" width="0.9" height="13.5"/><rect x="610.0" y="631" width="0.9" height="13.5"/><rect x="619.2" y="631" width="0.9" height="13.5"/><rect x="625.0" y="631" width="0.9" height="13.5"/><rect x="633.2" y="631" width="0.9" height="13.5"/><rect x="636.9" y="631" width="1.4" height="13.5"/><rect x="645.0" y="631" width="0.9" height="13.5"/><rect x="653.6" y="631" width="0.9" height="13.5"/><rect x="661.1" y="631" width="0.9" height="13.5"/><rect x="670.6" y="631" width="1.4" height="13.5"/><rect x="683.4" y="631" width="0.9" height="13.5"/><rect x="692.0" y="631" width="0.9" height="13.5"/><rect x="702.1" y="631" width="0.9" height="13.5"/><rect x="710.0" y="631" width="0.9" height="13.5"/><rect x="718.6" y="631" width="0.9" height="13.5"/><rect x="728.5" y="631" width="0.9" height="13.5"/><rect x="735.8" y="631" width="0.9" height="13.5"/><rect x="740.8" y="631" width="0.9" height="13.5"/><rect x="750.4" y="631" width="0.9" height="13.5"/><rect x="765.4" y="631" width="0.9" height="13.5"/><rect x="772.3" y="631" width="0.9" height="13.5"/><rect x="775.1" y="631" width="0.9" height="13.5"/><rect x="786.5" y="631" width="0.9" height="13.5"/><rect x="793.4" y="631" width="0.9" height="13.5"/><rect x="798.8" y="631" width="0.9" height="13.5"/><rect x="803.0" y="631" width="0.9" height="13.5"/><rect x="808.4" y="631" width="0.9" height="13.5"/><rect x="815.1" y="631" width="1.4" height="13.5"/><rect x="829.9" y="631" width="0.9" height="13.5"/><rect x="849.2" y="631" width="0.9" height="13.5"/><rect x="859.5" y="631" width="0.9" height="13.5"/><rect x="869.0" y="631" width="0.9" height="13.5"/><rect x="873.9" y="631" width="0.9" height="13.5"/><rect x="889.1" y="631" width="1.7" height="13.5"/><rect x="897.9" y="631" width="1.7" height="13.5"/><rect x="906.6" y="631" width="1.7" height="13.5"/><rect x="914.6" y="631" width="1.7" height="13.5"/></g><rect x="26.0" y="645.6" width="191.6" height="13.8" fill="#df8be0"/><rect x="218.9" y="645.6" width="161.2" height="13.8" fill="#df8be0"/><rect x="381.0" y="645.6" width="112.1" height="13.8" fill="#df8be0"/><rect x="494.0" y="645.6" width="115.6" height="13.8" fill="#df8be0"/><rect x="610.6" y="645.6" width="60.4" height="13.8" fill="#df8be0"/><rect x="672.0" y="645.6" width="79.0" height="13.8" fill="#df8be0"/><rect x="925.0" y="645.6" width="8.5" height="13.8" fill="#df8be0"/><rect x="935.0" y="645.6" width="6.0" height="13.8" fill="#df8be0"/><rect x="942.0" y="645.6" width="6.0" height="13.8" fill="#df8be0"/><rect x="949.0" y="645.6" width="7.0" height="13.8" fill="#df8be0"/><rect x="957.0" y="645.6" width="6.0" height="13.8" fill="#df8be0"/><rect x="964.0" y="645.6" width="7.5" height="13.8" fill="#df8be0"/><rect x="983.0" y="645.6" width="38.0" height="13.8" fill="#df8be0"/><rect x="983.6" y="648.2" width="29.9" height="8.1" fill="#c2a98a" stroke="#7d6a55" stroke-width=".8"/><rect x="48.5" y="660.2" width="28.5" height="14.8" fill="#df8be0"/><rect x="94.5" y="660.2" width="20.1" height="14.8" fill="#df8be0"/><rect x="167.6" y="660.2" width="50.0" height="14.8" fill="#df8be0"/><rect x="234.0" y="660.2" width="39.0" height="14.8" fill="#df8be0"/><rect x="294.0" y="660.2" width="51.4" height="14.8" fill="#df8be0"/><rect x="405.0" y="660.2" width="35.5" height="14.8" fill="#df8be0"/><rect x="471.0" y="660.2" width="22.0" height="14.8" fill="#df8be0"/><rect x="572.0" y="660.2" width="35.8" height="14.8" fill="#df8be0"/><rect x="925.0" y="660.2" width="8.6" height="14.8" fill="#df8be0"/><rect x="934.6" y="660.2" width="86.4" height="14.8" fill="#df8be0"/><rect x="260.0" y="673.0" width="12.0" height="1.0" fill="#a868aa"/><rect x="432.0" y="673.0" width="8.0" height="1.0" fill="#a868aa"/><rect x="598.0" y="673.0" width="9.0" height="1.0" fill="#a868aa"/><rect x="26.0" y="674.6" width="725.0" height="15.0" fill="#df8be0"/><rect x="752.0" y="674.6" width="269.0" height="15.0" fill="#df8be0"/><rect x="26.0" y="659.4" width="725.0" height="0.8" fill="#c278c3"/><rect x="0.0" y="675.0" width="17.5" height="15.0" fill="#6d9cd8"/><rect x="0.0" y="694.0" width="17.5" height="31.0" fill="#3e5c89"/><path d="M0.0 709.0L0.0 705.0L1.0 704.7L2.0 705.0L3.0 704.8L4.0 704.9L5.0 705.8L6.0 706.0L7.0 704.9L8.0 705.9L9.0 706.0L10.0 705.0L11.0 705.8L12.0 705.3L13.0 705.9L14.0 705.8L15.0 706.6L16.0 705.9L17.0 705.6L17.5 709.0Z" fill="#6c98d1"/><path d="M0.0 725.0L0.0 721.2L1.0 721.5L2.0 721.1L3.0 721.6L4.0 721.8L5.0 721.3L6.0 720.6L7.0 720.8L8.0 721.0L9.0 721.9L10.0 721.5L11.0 721.9L12.0 722.1L13.0 722.3L14.0 722.2L15.0 721.1L16.0 721.3L17.0 721.4L17.5 725.0Z" fill="#6c98d1"/><rect x="48.3" y="694.0" width="89.9" height="31.0" fill="#1d7b55"/><path d="M48.3 709.6L48.3 702.3L49.3 703.1L50.3 702.0L51.3 702.6L52.3 701.4L53.3 702.6L54.3 701.5L55.3 702.5L56.3 701.0L57.3 701.1L58.3 702.4L59.3 701.5L60.3 702.3L61.3 701.9L62.3 701.3L63.3 702.7L64.3 702.7L65.3 703.0L66.3 703.1L67.3 702.4L68.3 703.0L69.3 703.0L70.3 702.0L71.3 702.7L72.3 702.5L73.3 702.4L74.3 701.5L75.3 702.4L76.3 701.7L77.3 701.1L78.3 701.8L79.3 702.3L80.3 702.6L81.3 701.6L82.3 702.5L83.3 702.0L84.3 701.3L85.3 701.3L86.3 702.2L87.3 702.1L88.3 702.2L89.3 702.2L90.3 701.8L91.3 702.5L92.3 702.5L93.3 702.5L94.3 702.2L95.3 701.8L96.3 702.2L97.3 702.0L98.3 701.4L99.3 701.4L100.3 702.1L101.3 701.3L102.3 702.9L103.3 701.9L104.3 701.8L105.3 702.4L106.3 702.4L107.3 702.7L108.3 701.8L109.3 702.8L110.3 702.1L111.3 701.9L112.3 701.7L113.3 701.5L114.3 702.8L115.3 702.8L116.3 702.6L117.3 701.6L118.3 702.1L119.3 701.8L120.3 702.3L121.3 702.1L122.3 701.3L123.3 702.3L124.3 702.2L125.3 701.7L126.3 701.3L127.3 701.2L128.3 701.9L129.3 702.7L130.3 702.6L131.3 702.7L132.3 702.8L133.3 701.6L134.3 702.0L135.3 702.5L136.3 701.2L137.3 701.6L138.2 709.6Z" fill="#2fd19b"/><path d="M48.3 725.0L48.3 717.9L49.3 717.3L50.3 717.9L51.3 716.7L52.3 717.2L53.3 718.1L54.3 718.2L55.3 717.0L56.3 718.0L57.3 717.0L58.3 717.2L59.3 717.4L60.3 716.8L61.3 717.3L62.3 717.3L63.3 717.7L64.3 717.9L65.3 718.2L66.3 717.7L67.3 717.7L68.3 717.0L69.3 717.9L70.3 717.7L71.3 716.7L72.3 717.3L73.3 717.2L74.3 717.2L75.3 716.8L76.3 718.0L77.3 717.0L78.3 718.3L79.3 717.9L80.3 717.3L81.3 717.8L82.3 717.4L83.3 717.9L84.3 717.8L85.3 717.4L86.3 717.1L87.3 716.9L88.3 717.3L89.3 717.5L90.3 716.4L91.3 716.8L92.3 717.1L93.3 717.1L94.3 717.8L95.3 717.7L96.3 717.9L97.3 716.3L98.3 716.5L99.3 717.9L100.3 716.8L101.3 717.4L102.3 717.0L103.3 717.5L104.3 717.7L105.3 718.2L106.3 718.1L107.3 717.7L108.3 717.2L109.3 718.2L110.3 717.7L111.3 716.8L112.3 718.3L113.3 717.8L114.3 717.0L115.3 717.4L116.3 716.9L117.3 717.5L118.3 717.4L119.3 718.2L120.3 717.9L121.3 717.6L122.3 717.0L123.3 717.4L124.3 717.9L125.3 716.9L126.3 717.4L127.3 717.2L128.3 718.2L129.3 718.0L130.3 717.5L131.3 717.8L132.3 718.1L133.3 717.0L134.3 716.9L135.3 717.5L136.3 717.0L137.3 717.4L138.2 725.0Z" fill="#2fd19b"/><rect x="140.0" y="694.0" width="531.2" height="31.0" fill="#1d7b55"/><path d="M140.0 709.6L140.0 701.5L141.0 702.8L142.0 702.5L143.0 702.0L144.0 702.9L145.0 701.8L146.0 703.1L147.0 702.9L148.0 702.0L149.0 701.8L150.0 702.6L151.0 701.5L152.0 701.6L153.0 702.7L154.0 702.7L155.0 701.5L156.0 701.6L157.0 701.1L158.0 702.6L159.0 701.7L160.0 701.9L161.0 701.8L162.0 701.4L163.0 701.6L164.0 702.5L165.0 701.3L166.0 701.7L167.0 701.6L168.0 701.9L169.0 701.8L170.0 701.3L171.0 701.6L172.0 702.2L173.0 702.7L174.0 702.6L175.0 702.8L176.0 702.1L177.0 702.9L178.0 702.1L179.0 702.8L180.0 701.5L181.0 702.4L182.0 701.5L183.0 701.4L184.0 701.5L185.0 701.2L186.0 702.1L187.0 701.7L188.0 701.8L189.0 701.2L190.0 702.2L191.0 701.7L192.0 701.5L193.0 701.7L194.0 701.2L195.0 702.2L196.0 702.4L197.0 702.5L198.0 702.2L199.0 701.8L200.0 702.1L201.0 701.3L202.0 702.5L203.0 701.2L204.0 701.3L205.0 702.1L206.0 702.2L207.0 701.9L208.0 702.5L209.0 701.0L210.0 702.5L211.0 702.4L212.0 701.8L213.0 701.6L214.0 702.3L215.0 702.6L216.0 702.7L217.0 701.6L218.0 701.5L219.0 702.3L220.0 702.1L221.0 702.1L222.0 701.8L223.0 702.2L224.0 702.4L225.0 702.2L226.0 701.6L227.0 701.7L228.0 701.4L229.0 701.7L230.0 702.4L231.0 702.9L232.0 702.1L233.0 702.5L234.0 701.2L235.0 701.7L236.0 702.4L237.0 701.8L238.0 701.0L239.0 701.1L240.0 701.5L241.0 701.5L242.0 701.3L243.0 701.1L244.0 702.6L245.0 702.0L246.0 702.6L247.0 702.3L248.0 702.1L249.0 701.9L250.0 702.0L251.0 701.6L252.0 701.8L253.0 702.5L254.0 702.2L255.0 701.4L256.0 702.1L257.0 701.7L258.0 701.2L259.0 701.4L260.0 702.3L261.0 701.3L262.0 702.8L263.0 701.7L264.0 702.5L265.0 702.6L266.0 702.3L267.0 701.6L268.0 702.3L269.0 702.0L270.0 702.9L271.0 701.8L272.0 703.2L273.0 703.1L274.0 703.0L275.0 703.0L276.0 702.9L277.0 702.4L278.0 701.5L279.0 702.7L280.0 701.6L281.0 701.5L282.0 701.9L283.0 703.0L284.0 702.4L285.0 701.7L286.0 701.8L287.0 701.9L288.0 701.6L289.0 702.1L290.0 701.9L291.0 702.0L292.0 701.4L293.0 702.0L294.0 703.1L295.0 701.5L296.0 702.5L297.0 702.0L298.0 702.2L299.0 701.6L300.0 702.4L301.0 702.0L302.0 702.3L303.0 702.1L304.0 702.2L305.0 701.7L306.0 702.3L307.0 702.7L308.0 701.7L309.0 702.8L310.0 701.5L311.0 701.3L312.0 702.3L313.0 702.0L314.0 702.2L315.0 703.0L316.0 701.7L317.0 702.1L318.0 701.6L319.0 702.1L320.0 702.8L321.0 702.7L322.0 702.7L323.0 702.4L324.0 702.9L325.0 703.0L326.0 702.0L327.0 702.9L328.0 702.9L329.0 703.1L330.0 701.9L331.0 701.9L332.0 702.6L333.0 702.4L334.0 702.6L335.0 701.7L336.0 701.8L337.0 701.9L338.0 703.2L339.0 701.8L340.0 702.2L341.0 703.1L342.0 702.5L343.0 702.3L344.0 702.5L345.0 701.8L346.0 702.0L347.0 701.5L348.0 701.1L349.0 702.3L350.0 702.4L351.0 701.2L352.0 702.7L353.0 701.6L354.0 702.2L355.0 701.8L356.0 702.2L357.0 701.8L358.0 702.1L359.0 702.0L360.0 701.1L361.0 701.2L362.0 701.5L363.0 701.7L364.0 701.9L365.0 701.5L366.0 701.5L367.0 701.1L368.0 701.7L369.0 700.9L370.0 701.7L371.0 701.5L372.0 702.5L373.0 701.9L374.0 701.9L375.0 702.8L376.0 702.7L377.0 701.3L378.0 702.5L379.0 702.6L380.0 701.8L381.0 701.7L382.0 702.1L383.0 701.5L384.0 701.7L385.0 701.8L386.0 702.7L387.0 702.0L388.0 701.8L389.0 702.8L390.0 703.1L391.0 702.2L392.0 701.9L393.0 701.4L394.0 702.8L395.0 702.3L396.0 702.2L397.0 703.0L398.0 702.5L399.0 702.7L400.0 702.6L401.0 703.1L402.0 703.1L403.0 702.6L404.0 701.5L405.0 702.0L406.0 702.0L407.0 701.3L408.0 702.7L409.0 701.0L410.0 701.8L411.0 702.5L412.0 701.9L413.0 702.0L414.0 701.8L415.0 702.4L416.0 701.3L417.0 702.8L418.0 703.0L419.0 702.5L420.0 702.2L421.0 701.7L422.0 701.9L423.0 703.1L424.0 701.6L425.0 702.9L426.0 702.4L427.0 702.7L428.0 702.0L429.0 702.7L430.0 702.4L431.0 701.2L432.0 702.2L433.0 702.7L434.0 701.3L435.0 702.5L436.0 701.8L437.0 701.8L438.0 701.4L439.0 702.2L440.0 701.7L441.0 702.6L442.0 702.7L443.0 701.8L444.0 702.8L445.0 702.2L446.0 701.2L447.0 702.2L448.0 702.5L449.0 702.2L450.0 701.6L451.0 702.0L452.0 702.8L453.0 702.7L454.0 702.0L455.0 702.5L456.0 702.8L457.0 701.9L458.0 701.6L459.0 702.2L460.0 702.7L461.0 701.8L462.0 702.8L463.0 701.9L464.0 702.5L465.0 702.5L466.0 701.8L467.0 701.2L468.0 702.0L469.0 702.8L470.0 702.3L471.0 701.9L472.0 702.4L473.0 702.9L474.0 702.4L475.0 702.3L476.0 702.6L477.0 701.6L478.0 702.7L479.0 702.1L480.0 702.8L481.0 701.5L482.0 702.0L483.0 702.4L484.0 703.1L485.0 701.7L486.0 702.6L487.0 702.8L488.0 701.3L489.0 701.3L490.0 702.5L491.0 702.5L492.0 702.7L493.0 702.5L494.0 702.6L495.0 701.7L496.0 701.5L497.0 702.0L498.0 701.5L499.0 702.1L500.0 701.8L501.0 702.1L502.0 703.0L503.0 702.5L504.0 702.5L505.0 702.4L506.0 703.2L507.0 703.2L508.0 702.2L509.0 702.4L510.0 702.8L511.0 702.5L512.0 702.0L513.0 702.8L514.0 702.8L515.0 703.2L516.0 702.6L517.0 703.0L518.0 702.6L519.0 702.1L520.0 701.6L521.0 701.7L522.0 701.5L523.0 702.5L524.0 702.6L525.0 701.7L526.0 702.7L527.0 701.8L528.0 702.0L529.0 701.9L530.0 702.0L531.0 702.1L532.0 702.0L533.0 701.3L534.0 702.4L535.0 701.7L536.0 702.4L537.0 703.2L538.0 701.9L539.0 702.1L540.0 703.2L541.0 702.1L542.0 702.9L543.0 703.2L544.0 701.6L545.0 702.4L546.0 702.3L547.0 702.4L548.0 702.9L549.0 701.2L550.0 701.7L551.0 702.9L552.0 702.8L553.0 702.7L554.0 701.3L555.0 702.0L556.0 701.6L557.0 701.0L558.0 702.1L559.0 702.1L560.0 701.9L561.0 701.6L562.0 702.1L563.0 701.8L564.0 702.5L565.0 702.2L566.0 701.7L567.0 702.2L568.0 701.4L569.0 701.4L570.0 701.7L571.0 702.3L572.0 701.3L573.0 702.4L574.0 701.8L575.0 701.8L576.0 702.1L577.0 701.8L578.0 702.6L579.0 702.5L580.0 701.6L581.0 701.4L582.0 701.4L583.0 702.5L584.0 702.7L585.0 701.1L586.0 702.7L587.0 701.3L588.0 701.6L589.0 701.7L590.0 702.0L591.0 701.3L592.0 701.4L593.0 701.3L594.0 702.2L595.0 702.3L596.0 701.2L597.0 702.7L598.0 701.7L599.0 701.8L600.0 702.0L601.0 703.1L602.0 702.0L603.0 701.8L604.0 702.7L605.0 701.2L606.0 702.5L607.0 701.8L608.0 701.5L609.0 701.2L610.0 702.1L611.0 701.6L612.0 701.3L613.0 702.5L614.0 702.3L615.0 702.8L616.0 701.6L617.0 702.0L618.0 702.6L619.0 703.2L620.0 701.9L621.0 702.4L622.0 701.6L623.0 701.7L624.0 701.8L625.0 702.2L626.0 701.6L627.0 702.4L628.0 701.5L629.0 702.5L630.0 701.7L631.0 701.9L632.0 702.3L633.0 701.6L634.0 701.6L635.0 702.6L636.0 701.6L637.0 702.2L638.0 702.2L639.0 702.0L640.0 702.0L641.0 701.8L642.0 702.0L643.0 702.1L644.0 702.8L645.0 701.9L646.0 701.9L647.0 702.3L648.0 701.8L649.0 701.1L650.0 702.3L651.0 702.7L652.0 702.7L653.0 701.3L654.0 701.8L655.0 702.2L656.0 702.6L657.0 702.5L658.0 701.7L659.0 701.1L660.0 702.1L661.0 702.7L662.0 702.0L663.0 702.0L664.0 702.5L665.0 702.9L666.0 701.9L667.0 702.5L668.0 703.2L669.0 703.2L670.0 701.6L671.0 702.9L671.2 709.6Z" fill="#2fd19b"/><path d="M140.0 725.0L140.0 717.5L141.0 718.4L142.0 717.0L143.0 718.1L144.0 717.2L145.0 718.4L146.0 717.9L147.0 717.3L148.0 717.1L149.0 716.7L150.0 717.6L151.0 717.8L152.0 717.6L153.0 716.9L154.0 716.7L155.0 717.8L156.0 716.8L157.0 717.4L158.0 717.7L159.0 716.7L160.0 717.6L161.0 717.1L162.0 717.6L163.0 717.7L164.0 718.0L165.0 716.9L166.0 717.1L167.0 717.3L168.0 717.5L169.0 717.8L170.0 717.8L171.0 717.6L172.0 717.9L173.0 718.5L174.0 718.1L175.0 717.9L176.0 717.3L177.0 716.9L178.0 717.5L179.0 717.6L180.0 717.6L181.0 717.2L182.0 717.0L183.0 717.3L184.0 717.7L185.0 716.6L186.0 718.0L187.0 717.5L188.0 718.0L189.0 717.5L190.0 716.9L191.0 716.9L192.0 717.5L193.0 717.5L194.0 717.1L195.0 717.1L196.0 718.3L197.0 717.2L198.0 717.7L199.0 717.8L200.0 717.6L201.0 718.2L202.0 717.6L203.0 718.4L204.0 717.4L205.0 716.9L206.0 717.5L207.0 718.0L208.0 717.2L209.0 717.1L210.0 717.2L211.0 717.6L212.0 718.1L213.0 718.1L214.0 716.9L215.0 717.9L216.0 718.0L217.0 717.2L218.0 717.9L219.0 716.7L220.0 717.3L221.0 718.1L222.0 717.2L223.0 717.4L224.0 718.4L225.0 717.6L226.0 717.2L227.0 718.6L228.0 716.9L229.0 717.2L230.0 718.0L231.0 716.9L232.0 717.0L233.0 718.7L234.0 718.6L235.0 717.6L236.0 718.2L237.0 717.7L238.0 718.2L239.0 718.1L240.0 718.4L241.0 718.1L242.0 717.7L243.0 718.1L244.0 718.4L245.0 716.8L246.0 717.4L247.0 716.5L248.0 717.2L249.0 717.0L250.0 717.4L251.0 717.8L252.0 716.4L253.0 717.7L254.0 717.9L255.0 717.4L256.0 716.8L257.0 717.7L258.0 717.7L259.0 718.1L260.0 716.5L261.0 716.5L262.0 717.0L263.0 717.3L264.0 718.0L265.0 716.7L266.0 717.3L267.0 717.1L268.0 717.8L269.0 717.9L270.0 717.6L271.0 718.0L272.0 717.2L273.0 717.5L274.0 718.0L275.0 717.0L276.0 716.9L277.0 717.2L278.0 717.8L279.0 716.9L280.0 717.0L281.0 718.1L282.0 717.2L283.0 718.1L284.0 717.7L285.0 717.0L286.0 716.9L287.0 717.5L288.0 718.2L289.0 717.6L290.0 718.2L291.0 716.8L292.0 717.1L293.0 716.8L294.0 717.9L295.0 717.6L296.0 718.6L297.0 718.7L298.0 718.6L299.0 718.6L300.0 717.6L301.0 717.9L302.0 717.8L303.0 718.2L304.0 718.7L305.0 718.0L306.0 718.3L307.0 718.3L308.0 717.2L309.0 717.9L310.0 717.2L311.0 718.4L312.0 717.5L313.0 717.6L314.0 717.6L315.0 718.0L316.0 717.3L317.0 716.7L318.0 716.8L319.0 717.4L320.0 717.3L321.0 716.7L322.0 716.8L323.0 718.1L324.0 718.1L325.0 717.2L326.0 716.9L327.0 717.6L328.0 718.3L329.0 718.0L330.0 717.2L331.0 717.7L332.0 718.0L333.0 718.3L334.0 718.1L335.0 716.9L336.0 716.8L337.0 717.3L338.0 717.6L339.0 717.5L340.0 716.7L341.0 718.1L342.0 717.5L343.0 717.9L344.0 717.6L345.0 717.6L346.0 717.4L347.0 717.1L348.0 717.9L349.0 716.6L350.0 716.4L351.0 717.1L352.0 717.8L353.0 717.7L354.0 717.7L355.0 717.8L356.0 716.6L357.0 716.6L358.0 716.6L359.0 717.7L360.0 716.9L361.0 718.1L362.0 717.4L363.0 718.1L364.0 717.4L365.0 716.8L366.0 718.1L367.0 717.2L368.0 717.1L369.0 717.7L370.0 717.2L371.0 717.8L372.0 716.8L373.0 716.6L374.0 717.5L375.0 717.3L376.0 717.6L377.0 717.7L378.0 717.4L379.0 718.3L380.0 717.7L381.0 717.3L382.0 717.9L383.0 717.6L384.0 717.1L385.0 717.8L386.0 716.4L387.0 718.1L388.0 717.3L389.0 717.0L390.0 716.2L391.0 717.6L392.0 716.9L393.0 717.3L394.0 717.5L395.0 717.0L396.0 716.3L397.0 716.7L398.0 716.6L399.0 717.7L400.0 716.3L401.0 716.4L402.0 716.4L403.0 717.3L404.0 716.8L405.0 716.7L406.0 716.6L407.0 718.2L408.0 716.9L409.0 717.0L410.0 717.2L411.0 717.9L412.0 718.0L413.0 718.4L414.0 717.0L415.0 717.8L416.0 717.8L417.0 718.1L418.0 718.4L419.0 717.8L420.0 717.3L421.0 717.0L422.0 716.7L423.0 716.8L424.0 717.3L425.0 717.8L426.0 717.5L427.0 718.1L428.0 717.8L429.0 716.4L430.0 717.4L431.0 717.7L432.0 716.4L433.0 716.4L434.0 717.5L435.0 717.2L436.0 717.1L437.0 716.9L438.0 717.3L439.0 718.2L440.0 718.3L441.0 716.8L442.0 718.4L443.0 718.4L444.0 718.2L445.0 718.2L446.0 717.5L447.0 718.1L448.0 718.0L449.0 717.1L450.0 717.4L451.0 718.5L452.0 718.6L453.0 717.4L454.0 717.4L455.0 718.2L456.0 718.2L457.0 718.2L458.0 717.7L459.0 718.2L460.0 717.9L461.0 717.6L462.0 717.4L463.0 717.5L464.0 716.7L465.0 717.1L466.0 717.9L467.0 716.8L468.0 717.8L469.0 717.9L470.0 716.4L471.0 716.6L472.0 717.8L473.0 716.8L474.0 716.7L475.0 716.8L476.0 717.1L477.0 716.8L478.0 718.0L479.0 717.3L480.0 717.0L481.0 718.1L482.0 718.0L483.0 716.7L484.0 717.0L485.0 718.4L486.0 717.3L487.0 716.8L488.0 717.1L489.0 717.9L490.0 717.6L491.0 718.0L492.0 717.2L493.0 717.8L494.0 717.3L495.0 717.5L496.0 718.3L497.0 716.6L498.0 717.1L499.0 718.0L500.0 717.0L501.0 716.7L502.0 717.3L503.0 717.6L504.0 716.8L505.0 717.5L506.0 717.3L507.0 718.0L508.0 716.6L509.0 717.4L510.0 717.8L511.0 718.1L512.0 718.2L513.0 716.8L514.0 717.5L515.0 717.6L516.0 717.0L517.0 717.3L518.0 717.6L519.0 718.4L520.0 717.4L521.0 717.2L522.0 717.1L523.0 717.4L524.0 717.9L525.0 717.0L526.0 717.8L527.0 718.2L528.0 717.0L529.0 717.7L530.0 717.8L531.0 717.3L532.0 716.9L533.0 717.8L534.0 717.2L535.0 716.7L536.0 717.9L537.0 717.5L538.0 717.2L539.0 717.6L540.0 716.8L541.0 717.0L542.0 716.6L543.0 717.7L544.0 717.5L545.0 717.4L546.0 717.0L547.0 716.6L548.0 716.9L549.0 718.0L550.0 717.3L551.0 717.5L552.0 717.2L553.0 717.4L554.0 717.9L555.0 717.3L556.0 717.3L557.0 717.3L558.0 718.2L559.0 716.8L560.0 717.3L561.0 717.3L562.0 717.1L563.0 717.0L564.0 716.9L565.0 716.9L566.0 717.0L567.0 718.3L568.0 717.9L569.0 717.2L570.0 718.3L571.0 718.2L572.0 718.0L573.0 716.8L574.0 718.2L575.0 717.4L576.0 718.4L577.0 716.8L578.0 718.3L579.0 717.2L580.0 718.3L581.0 716.7L582.0 716.9L583.0 717.0L584.0 717.1L585.0 716.7L586.0 717.5L587.0 717.5L588.0 716.4L589.0 717.5L590.0 717.7L591.0 716.3L592.0 717.5L593.0 716.9L594.0 716.5L595.0 716.7L596.0 716.3L597.0 717.1L598.0 717.2L599.0 716.7L600.0 717.0L601.0 717.2L602.0 717.5L603.0 718.0L604.0 718.0L605.0 717.0L606.0 717.7L607.0 717.5L608.0 717.5L609.0 718.4L610.0 718.3L611.0 718.2L612.0 717.9L613.0 718.3L614.0 717.0L615.0 717.3L616.0 716.7L617.0 718.1L618.0 718.3L619.0 717.9L620.0 717.0L621.0 718.1L622.0 718.2L623.0 718.0L624.0 717.0L625.0 717.8L626.0 718.5L627.0 718.2L628.0 718.0L629.0 718.6L630.0 718.0L631.0 717.5L632.0 717.5L633.0 718.1L634.0 718.1L635.0 717.0L636.0 717.7L637.0 717.9L638.0 716.9L639.0 716.4L640.0 718.0L641.0 716.6L642.0 717.8L643.0 718.0L644.0 717.0L645.0 716.9L646.0 717.2L647.0 718.0L648.0 716.9L649.0 718.2L650.0 717.8L651.0 717.0L652.0 717.5L653.0 717.2L654.0 718.5L655.0 718.4L656.0 717.4L657.0 717.9L658.0 717.6L659.0 718.3L660.0 718.3L661.0 718.0L662.0 717.9L663.0 717.7L664.0 718.1L665.0 717.2L666.0 717.4L667.0 718.0L668.0 718.7L669.0 717.8L670.0 717.1L671.0 717.7L671.2 725.0Z" fill="#2fd19b"/><rect x="672.0" y="694.0" width="249.3" height="31.0" fill="#1d7b55"/><path d="M672.0 709.6L672.0 702.6L673.0 702.3L674.0 702.4L675.0 701.7L676.0 701.7L677.0 702.6L678.0 701.2L679.0 701.3L680.0 702.4L681.0 701.4L682.0 702.6L683.0 701.6L684.0 702.0L685.0 701.7L686.0 701.3L687.0 701.2L688.0 702.0L689.0 702.2L690.0 702.3L691.0 701.4L692.0 702.1L693.0 702.1L694.0 702.4L695.0 701.7L696.0 702.6L697.0 702.2L698.0 701.1L699.0 702.4L700.0 701.4L701.0 701.3L702.0 701.9L703.0 702.5L704.0 702.6L705.0 702.0L706.0 701.6L707.0 702.5L708.0 703.1L709.0 702.4L710.0 702.9L711.0 702.7L712.0 702.5L713.0 701.7L714.0 702.4L715.0 702.6L716.0 702.3L717.0 701.9L718.0 701.8L719.0 703.3L720.0 702.0L721.0 703.3L722.0 703.2L723.0 702.0L724.0 702.9L725.0 702.8L726.0 703.2L727.0 702.0L728.0 702.6L729.0 702.4L730.0 701.7L731.0 701.6L732.0 702.0L733.0 702.1L734.0 702.9L735.0 701.3L736.0 702.1L737.0 701.3L738.0 702.8L739.0 702.7L740.0 702.6L741.0 701.2L742.0 701.2L743.0 702.3L744.0 701.8L745.0 702.1L746.0 702.4L747.0 701.4L748.0 701.3L749.0 702.5L750.0 703.0L751.0 701.5L752.0 702.0L753.0 701.5L754.0 702.0L755.0 701.7L756.0 702.8L757.0 701.5L758.0 702.6L759.0 702.3L760.0 702.0L761.0 701.8L762.0 702.7L763.0 701.4L764.0 702.6L765.0 701.5L766.0 701.0L767.0 702.6L768.0 701.6L769.0 702.1L770.0 701.2L771.0 701.4L772.0 702.5L773.0 702.6L774.0 702.7L775.0 702.2L776.0 702.4L777.0 702.8L778.0 701.6L779.0 701.7L780.0 701.7L781.0 702.3L782.0 702.0L783.0 701.9L784.0 702.2L785.0 701.6L786.0 701.9L787.0 702.0L788.0 701.9L789.0 701.4L790.0 702.3L791.0 701.2L792.0 701.3L793.0 702.1L794.0 702.4L795.0 701.4L796.0 702.4L797.0 702.3L798.0 702.9L799.0 702.5L800.0 702.4L801.0 702.2L802.0 702.0L803.0 702.0L804.0 701.4L805.0 702.6L806.0 701.9L807.0 703.1L808.0 701.8L809.0 702.9L810.0 702.1L811.0 702.0L812.0 702.8L813.0 701.9L814.0 701.7L815.0 702.0L816.0 702.8L817.0 703.2L818.0 702.1L819.0 702.8L820.0 702.3L821.0 701.3L822.0 702.8L823.0 702.6L824.0 702.6L825.0 702.8L826.0 702.3L827.0 701.5L828.0 702.2L829.0 702.7L830.0 702.2L831.0 702.7L832.0 702.0L833.0 702.6L834.0 702.0L835.0 702.7L836.0 702.1L837.0 702.2L838.0 701.6L839.0 702.4L840.0 702.3L841.0 702.3L842.0 701.6L843.0 701.8L844.0 702.7L845.0 702.9L846.0 702.3L847.0 702.4L848.0 702.4L849.0 702.0L850.0 701.3L851.0 702.3L852.0 702.7L853.0 701.5L854.0 703.0L855.0 702.9L856.0 701.9L857.0 701.4L858.0 701.7L859.0 701.7L860.0 702.1L861.0 702.8L862.0 703.1L863.0 703.1L864.0 702.3L865.0 702.6L866.0 702.5L867.0 702.1L868.0 702.6L869.0 701.7L870.0 702.2L871.0 702.3L872.0 701.7L873.0 702.8L874.0 702.3L875.0 701.9L876.0 702.1L877.0 702.9L878.0 702.0L879.0 702.7L880.0 701.7L881.0 702.4L882.0 703.1L883.0 702.0L884.0 702.4L885.0 702.8L886.0 701.7L887.0 702.2L888.0 701.5L889.0 701.4L890.0 701.9L891.0 701.7L892.0 702.6L893.0 703.0L894.0 703.0L895.0 702.0L896.0 703.1L897.0 702.6L898.0 701.3L899.0 702.6L900.0 703.0L901.0 702.6L902.0 701.3L903.0 702.4L904.0 702.9L905.0 702.4L906.0 702.5L907.0 702.4L908.0 701.4L909.0 701.5L910.0 702.2L911.0 702.0L912.0 701.4L913.0 702.2L914.0 701.1L915.0 702.0L916.0 702.4L917.0 702.1L918.0 701.2L919.0 701.5L920.0 702.5L921.0 701.4L921.3 709.6Z" fill="#2fd19b"/><path d="M672.0 725.0L672.0 717.4L673.0 717.5L674.0 718.0L675.0 716.9L676.0 717.6L677.0 717.0L678.0 717.9L679.0 716.8L680.0 717.9L681.0 717.2L682.0 717.6L683.0 717.4L684.0 718.0L685.0 718.0L686.0 717.6L687.0 716.7L688.0 717.5L689.0 718.0L690.0 717.9L691.0 718.4L692.0 717.8L693.0 717.1L694.0 718.3L695.0 718.2L696.0 718.5L697.0 716.8L698.0 718.2L699.0 718.1L700.0 717.3L701.0 717.8L702.0 717.0L703.0 716.4L704.0 717.3L705.0 716.5L706.0 716.6L707.0 717.7L708.0 718.2L709.0 717.2L710.0 717.3L711.0 718.2L712.0 717.1L713.0 718.3L714.0 716.8L715.0 717.0L716.0 717.2L717.0 718.0L718.0 716.8L719.0 717.0L720.0 717.6L721.0 717.4L722.0 717.8L723.0 716.9L724.0 717.8L725.0 716.6L726.0 718.1L727.0 716.7L728.0 716.7L729.0 717.0L730.0 717.6L731.0 716.4L732.0 717.9L733.0 716.5L734.0 717.4L735.0 716.9L736.0 717.3L737.0 717.2L738.0 717.0L739.0 717.4L740.0 717.7L741.0 716.5L742.0 717.8L743.0 716.6L744.0 717.6L745.0 718.0L746.0 717.6L747.0 718.2L748.0 717.7L749.0 717.0L750.0 716.7L751.0 718.4L752.0 717.4L753.0 718.0L754.0 716.8L755.0 717.5L756.0 717.0L757.0 717.5L758.0 718.5L759.0 718.0L760.0 717.5L761.0 718.4L762.0 716.8L763.0 717.3L764.0 717.0L765.0 716.8L766.0 718.3L767.0 718.2L768.0 717.3L769.0 716.6L770.0 717.7L771.0 717.9L772.0 717.3L773.0 717.5L774.0 717.0L775.0 717.5L776.0 717.8L777.0 717.7L778.0 717.9L779.0 718.5L780.0 718.5L781.0 718.6L782.0 718.5L783.0 717.0L784.0 717.9L785.0 717.1L786.0 718.5L787.0 718.4L788.0 717.5L789.0 717.0L790.0 716.9L791.0 717.7L792.0 718.3L793.0 717.6L794.0 717.8L795.0 718.2L796.0 718.1L797.0 716.8L798.0 717.5L799.0 717.7L800.0 717.6L801.0 717.3L802.0 716.9L803.0 718.3L804.0 718.1L805.0 718.3L806.0 718.1L807.0 716.6L808.0 717.5L809.0 717.5L810.0 717.5L811.0 717.4L812.0 717.0L813.0 716.5L814.0 717.1L815.0 716.5L816.0 716.6L817.0 716.5L818.0 717.7L819.0 717.9L820.0 716.9L821.0 716.9L822.0 716.6L823.0 717.9L824.0 718.2L825.0 717.2L826.0 717.6L827.0 717.2L828.0 717.2L829.0 717.3L830.0 716.5L831.0 717.8L832.0 716.8L833.0 717.8L834.0 717.6L835.0 718.0L836.0 717.6L837.0 717.9L838.0 717.2L839.0 717.4L840.0 717.0L841.0 717.8L842.0 716.9L843.0 716.9L844.0 716.8L845.0 718.5L846.0 718.0L847.0 717.8L848.0 717.6L849.0 718.3L850.0 717.7L851.0 717.1L852.0 717.5L853.0 717.8L854.0 716.9L855.0 716.7L856.0 717.0L857.0 717.0L858.0 717.1L859.0 717.9L860.0 717.0L861.0 717.0L862.0 717.7L863.0 717.3L864.0 718.2L865.0 716.7L866.0 717.1L867.0 717.1L868.0 717.5L869.0 716.8L870.0 716.5L871.0 717.5L872.0 716.3L873.0 718.0L874.0 717.4L875.0 717.5L876.0 717.5L877.0 718.0L878.0 717.5L879.0 717.5L880.0 716.5L881.0 717.3L882.0 717.3L883.0 717.1L884.0 718.0L885.0 717.8L886.0 716.4L887.0 716.9L888.0 718.1L889.0 716.9L890.0 717.4L891.0 716.5L892.0 717.2L893.0 716.5L894.0 718.0L895.0 716.5L896.0 716.6L897.0 717.5L898.0 716.6L899.0 718.3L900.0 717.8L901.0 718.0L902.0 717.6L903.0 718.0L904.0 717.6L905.0 717.7L906.0 717.9L907.0 717.7L908.0 716.9L909.0 717.5L910.0 717.6L911.0 718.3L912.0 716.8L913.0 717.7L914.0 718.6L915.0 718.5L916.0 718.5L917.0 717.8L918.0 716.9L919.0 717.9L920.0 717.4L921.0 717.5L921.3 725.0Z" fill="#2fd19b"/><rect x="48.3" y="709.6" width="873.0" height="0.8" fill="#1d7b55"/><rect x="254.0" y="699.0" width="7.0" height="10.0" fill="#1d7b55"/><rect x="254.0" y="714.0" width="7.0" height="11.0" fill="#1d7b55"/><rect x="422.0" y="699.0" width="6.5" height="10.0" fill="#1d7b55"/><rect x="422.0" y="714.0" width="6.5" height="11.0" fill="#1d7b55"/><rect x="753.5" y="699.0" width="6.5" height="10.0" fill="#1d7b55"/><rect x="753.5" y="714.0" width="6.5" height="11.0" fill="#1d7b55"/><rect x="513.5" y="700.0" width="0.9" height="9.0" fill="#1d7b55"/><rect x="513.5" y="716.0" width="0.9" height="9.0" fill="#1d7b55"/><rect x="572.5" y="700.0" width="0.9" height="9.0" fill="#1d7b55"/><rect x="572.5" y="716.0" width="0.9" height="9.0" fill="#1d7b55"/><rect x="707.0" y="700.0" width="0.9" height="9.0" fill="#1d7b55"/><rect x="707.0" y="716.0" width="0.9" height="9.0" fill="#1d7b55"/><rect x="781.0" y="700.0" width="0.9" height="9.0" fill="#1d7b55"/><rect x="781.0" y="716.0" width="0.9" height="9.0" fill="#1d7b55"/><rect x="30.2" y="726.4" width="17.8" height="30.6" fill="#3f5a88"/><path d="M30.2 741.6L30.2 737.6L31.2 738.0L32.2 738.2L33.2 736.5L34.2 737.4L35.2 737.3L36.2 737.7L37.2 738.3L38.2 737.5L39.2 738.0L40.2 737.5L41.2 737.8L42.2 737.2L43.2 738.1L44.2 738.6L45.2 738.4L46.2 736.8L47.2 738.0L48.0 741.6Z" fill="#729dd5"/><path d="M30.2 757.0L30.2 752.7L31.2 754.3L32.2 753.6L33.2 753.6L34.2 752.2L35.2 752.2L36.2 751.5L37.2 753.4L38.2 752.5L39.2 753.4L40.2 752.9L41.2 752.2L42.2 753.5L43.2 753.1L44.2 752.1L45.2 752.5L46.2 753.4L47.2 752.6L48.0 757.0Z" fill="#729dd5"/><rect x="30.2" y="741.6" width="17.8" height="0.8" fill="#3f5a88"/><rect x="140.0" y="726.4" width="75.3" height="30.6" fill="#3f5a88"/><path d="M140.0 741.6L140.0 734.5L141.0 734.1L142.0 733.8L143.0 734.4L144.0 735.3L145.0 733.3L146.0 733.3L147.0 734.0L148.0 734.1L149.0 733.8L150.0 734.0L151.0 733.2L152.0 733.4L153.0 733.6L154.0 733.8L155.0 733.9L156.0 734.9L157.0 734.6L158.0 734.9L159.0 733.3L160.0 734.9L161.0 734.4L162.0 734.8L163.0 734.9L164.0 735.6L165.0 735.0L166.0 736.7L167.0 735.8L168.0 735.5L169.0 736.5L170.0 737.6L171.0 737.9L172.0 736.2L173.0 736.7L174.0 736.5L175.0 736.7L176.0 735.8L177.0 735.5L178.0 736.0L179.0 736.6L180.0 735.3L181.0 734.7L182.0 734.6L183.0 736.3L184.0 736.4L185.0 734.1L186.0 734.3L187.0 734.6L188.0 734.7L189.0 735.2L190.0 734.3L191.0 734.8L192.0 734.3L193.0 735.7L194.0 734.5L195.0 735.4L196.0 735.0L197.0 737.0L198.0 735.4L199.0 735.7L200.0 737.2L201.0 736.3L202.0 735.9L203.0 736.4L204.0 736.7L205.0 735.6L206.0 735.3L207.0 735.1L208.0 735.0L209.0 736.1L210.0 734.1L211.0 735.2L212.0 734.8L213.0 735.5L214.0 735.3L215.0 736.2L215.3 741.6Z" fill="#729dd5"/><path d="M140.0 757.0L140.0 748.9L141.0 750.4L142.0 750.9L143.0 748.7L144.0 749.0L145.0 749.2L146.0 748.3L147.0 748.9L148.0 750.3L149.0 748.3L150.0 748.7L151.0 748.1L152.0 749.8L153.0 748.1L154.0 749.0L155.0 750.4L156.0 750.0L157.0 751.6L158.0 751.1L159.0 750.1L160.0 751.2L161.0 751.2L162.0 749.4L163.0 749.2L164.0 749.4L165.0 749.7L166.0 748.3L167.0 747.7L168.0 749.6L169.0 749.3L170.0 749.4L171.0 749.1L172.0 748.5L173.0 748.9L174.0 749.4L175.0 747.8L176.0 749.6L177.0 748.2L178.0 749.9L179.0 748.5L180.0 749.3L181.0 748.9L182.0 749.0L183.0 750.2L184.0 749.7L185.0 750.9L186.0 749.7L187.0 751.9L188.0 750.2L189.0 752.0L190.0 750.9L191.0 752.8L192.0 752.0L193.0 751.5L194.0 749.6L195.0 749.4L196.0 749.6L197.0 748.3L198.0 748.0L199.0 749.4L200.0 749.3L201.0 749.9L202.0 748.7L203.0 750.2L204.0 748.1L205.0 749.7L206.0 750.4L207.0 748.7L208.0 749.3L209.0 749.9L210.0 749.8L211.0 751.2L212.0 750.5L213.0 751.4L214.0 750.5L215.0 752.0L215.3 757.0Z" fill="#729dd5"/><rect x="140.0" y="741.6" width="75.3" height="0.8" fill="#3f5a88"/><rect x="218.8" y="726.4" width="72.7" height="30.6" fill="#3f5a88"/><path d="M218.8 741.6L218.8 734.1L219.8 734.8L220.8 734.1L221.8 733.6L222.8 733.6L223.8 733.7L224.8 734.3L225.8 733.7L226.8 734.8L227.8 735.3L228.8 734.8L229.8 734.1L230.8 733.8L231.8 735.4L232.8 733.3L233.8 733.8L234.8 734.7L235.8 735.2L236.8 732.9L237.8 735.1L238.8 733.3L239.8 733.3L240.8 733.9L241.8 734.0L242.8 735.3L243.8 734.3L244.8 736.2L245.8 735.0L246.8 736.5L247.8 735.9L248.8 736.5L249.8 736.2L250.8 736.0L251.8 736.0L252.8 734.4L253.8 735.9L254.8 733.9L255.8 733.3L256.8 734.5L257.8 733.0L258.8 734.8L259.8 733.9L260.8 734.2L261.8 732.8L262.8 733.1L263.8 733.8L264.8 733.6L265.8 734.4L266.8 734.9L267.8 734.0L268.8 734.4L269.8 734.1L270.8 733.4L271.8 734.0L272.8 733.4L273.8 735.5L274.8 734.7L275.8 734.1L276.8 734.3L277.8 736.1L278.8 735.5L279.8 734.4L280.8 736.8L281.8 736.7L282.8 735.4L283.8 735.2L284.8 736.5L285.8 735.3L286.8 734.9L287.8 737.3L288.8 736.4L289.8 736.9L290.8 736.8L291.5 741.6Z" fill="#729dd5"/><path d="M218.8 757.0L218.8 747.6L219.8 748.6L220.8 746.8L221.8 746.8L222.8 747.5L223.8 747.0L224.8 746.5L225.8 747.0L226.8 745.8L227.8 745.8L228.8 745.7L229.8 746.4L230.8 746.0L231.8 745.4L232.8 747.9L233.8 746.1L234.8 745.7L235.8 747.7L236.8 745.7L237.8 746.9L238.8 745.3L239.8 747.4L240.8 746.5L241.8 746.4L242.8 746.5L243.8 747.4L244.8 748.2L245.8 745.9L246.8 747.6L247.8 746.7L248.8 747.2L249.8 747.9L250.8 748.3L251.8 748.2L252.8 747.5L253.8 748.7L254.8 749.8L255.8 750.2L256.8 749.6L257.8 749.8L258.8 752.1L259.8 751.4L260.8 750.3L261.8 751.6L262.8 750.8L263.8 749.7L264.8 749.7L265.8 749.6L266.8 751.4L267.8 751.1L268.8 750.2L269.8 751.1L270.8 749.0L271.8 750.7L272.8 749.9L273.8 747.8L274.8 749.7L275.8 748.4L276.8 747.5L277.8 747.5L278.8 746.3L279.8 747.4L280.8 746.6L281.8 747.9L282.8 748.1L283.8 747.4L284.8 746.6L285.8 746.5L286.8 746.7L287.8 747.1L288.8 745.6L289.8 747.5L290.8 746.9L291.5 757.0Z" fill="#729dd5"/><rect x="218.8" y="741.6" width="72.7" height="0.8" fill="#3f5a88"/><rect x="291.5" y="726.4" width="91.5" height="30.6" fill="#3f5a88"/><path d="M291.5 741.6L291.5 733.7L292.5 734.8L293.5 734.8L294.5 735.0L295.5 735.7L296.5 736.1L297.5 735.3L298.5 735.1L299.5 734.5L300.5 735.6L301.5 734.1L302.5 736.1L303.5 734.7L304.5 736.1L305.5 735.5L306.5 735.5L307.5 733.3L308.5 733.9L309.5 734.1L310.5 733.3L311.5 733.0L312.5 734.3L313.5 732.8L314.5 733.8L315.5 732.2L316.5 731.4L317.5 731.9L318.5 730.7L319.5 730.0L320.5 731.3L321.5 729.6L322.5 731.0L323.5 731.1L324.5 731.6L325.5 732.1L326.5 731.1L327.5 732.9L328.5 732.4L329.5 734.5L330.5 734.6L331.5 735.2L332.5 734.0L333.5 732.7L334.5 733.4L335.5 732.5L336.5 733.4L337.5 733.2L338.5 732.4L339.5 730.3L340.5 730.7L341.5 730.1L342.5 730.5L343.5 731.7L344.5 731.8L345.5 730.8L346.5 731.9L347.5 731.0L348.5 730.9L349.5 731.5L350.5 729.8L351.5 732.0L352.5 729.9L353.5 732.2L354.5 730.1L355.5 731.7L356.5 732.5L357.5 731.6L358.5 731.6L359.5 732.5L360.5 732.4L361.5 732.0L362.5 733.0L363.5 733.1L364.5 732.3L365.5 733.1L366.5 732.5L367.5 733.7L368.5 733.3L369.5 733.9L370.5 734.8L371.5 734.5L372.5 733.9L373.5 733.9L374.5 732.9L375.5 732.5L376.5 732.0L377.5 732.5L378.5 730.6L379.5 730.1L380.5 731.1L381.5 729.7L382.5 730.7L383.0 741.6Z" fill="#729dd5"/><path d="M291.5 757.0L291.5 746.6L292.5 744.2L293.5 746.4L294.5 744.6L295.5 745.1L296.5 747.2L297.5 746.9L298.5 747.6L299.5 747.8L300.5 747.1L301.5 747.0L302.5 748.5L303.5 747.7L304.5 747.3L305.5 747.5L306.5 748.6L307.5 747.8L308.5 747.5L309.5 746.3L310.5 746.6L311.5 746.9L312.5 747.9L313.5 746.2L314.5 748.0L315.5 747.7L316.5 748.2L317.5 747.0L318.5 746.5L319.5 746.7L320.5 746.3L321.5 746.7L322.5 746.7L323.5 747.6L324.5 745.5L325.5 745.2L326.5 745.5L327.5 744.5L328.5 744.5L329.5 744.3L330.5 744.5L331.5 744.3L332.5 744.5L333.5 745.8L334.5 743.8L335.5 744.8L336.5 743.7L337.5 742.8L338.5 743.6L339.5 743.9L340.5 743.0L341.5 742.1L342.5 742.3L343.5 742.1L344.5 742.6L345.5 743.2L346.5 744.4L347.5 745.5L348.5 743.9L349.5 746.5L350.5 744.3L351.5 745.2L352.5 746.2L353.5 746.2L354.5 744.6L355.5 746.0L356.5 744.8L357.5 745.3L358.5 745.0L359.5 744.5L360.5 743.3L361.5 744.9L362.5 742.8L363.5 743.7L364.5 745.0L365.5 744.3L366.5 746.5L367.5 746.5L368.5 746.3L369.5 745.7L370.5 746.4L371.5 748.2L372.5 745.8L373.5 747.8L374.5 747.7L375.5 746.5L376.5 747.7L377.5 746.7L378.5 747.2L379.5 746.5L380.5 746.7L381.5 746.5L382.5 746.6L383.0 757.0Z" fill="#729dd5"/><rect x="291.5" y="741.6" width="91.5" height="0.8" fill="#3f5a88"/><rect x="401.0" y="726.4" width="64.0" height="30.6" fill="#3f5a88"/><path d="M401.0 741.6L401.0 734.4L402.0 733.4L403.0 734.9L404.0 732.6L405.0 734.7L406.0 734.4L407.0 734.3L408.0 733.6L409.0 734.5L410.0 733.0L411.0 733.8L412.0 732.5L413.0 733.7L414.0 733.6L415.0 734.8L416.0 734.0L417.0 735.3L418.0 734.4L419.0 736.1L420.0 735.6L421.0 736.6L422.0 734.8L423.0 735.4L424.0 736.0L425.0 734.6L426.0 734.7L427.0 736.6L428.0 736.0L429.0 736.2L430.0 736.1L431.0 735.6L432.0 736.4L433.0 734.8L434.0 734.6L435.0 734.3L436.0 733.9L437.0 734.0L438.0 734.0L439.0 734.6L440.0 733.1L441.0 733.0L442.0 733.6L443.0 734.9L444.0 734.0L445.0 734.5L446.0 735.4L447.0 734.8L448.0 734.9L449.0 735.9L450.0 736.3L451.0 736.9L452.0 737.3L453.0 737.2L454.0 736.5L455.0 736.2L456.0 737.3L457.0 737.2L458.0 735.7L459.0 736.0L460.0 736.4L461.0 736.2L462.0 736.4L463.0 736.4L464.0 736.6L465.0 734.9L465.0 741.6Z" fill="#729dd5"/><path d="M401.0 757.0L401.0 749.9L402.0 750.2L403.0 750.4L404.0 750.9L405.0 748.8L406.0 749.2L407.0 747.7L408.0 748.5L409.0 746.4L410.0 747.4L411.0 746.6L412.0 747.4L413.0 746.2L414.0 747.1L415.0 747.7L416.0 746.9L417.0 749.3L418.0 749.4L419.0 749.6L420.0 750.2L421.0 749.9L422.0 749.9L423.0 750.6L424.0 750.0L425.0 750.2L426.0 748.6L427.0 749.0L428.0 750.8L429.0 749.5L430.0 750.4L431.0 751.5L432.0 749.5L433.0 750.5L434.0 748.6L435.0 748.2L436.0 748.5L437.0 748.4L438.0 747.1L439.0 747.2L440.0 747.4L441.0 747.5L442.0 748.4L443.0 747.2L444.0 747.5L445.0 746.4L446.0 748.5L447.0 747.9L448.0 746.3L449.0 746.9L450.0 747.4L451.0 747.8L452.0 747.8L453.0 747.1L454.0 747.2L455.0 748.3L456.0 749.2L457.0 750.1L458.0 750.3L459.0 749.8L460.0 749.8L461.0 750.0L462.0 751.5L463.0 750.8L464.0 750.6L465.0 749.1L465.0 757.0Z" fill="#729dd5"/><rect x="401.0" y="741.6" width="64.0" height="0.8" fill="#3f5a88"/><rect x="467.0" y="726.4" width="99.5" height="30.6" fill="#3f5a88"/><path d="M467.0 741.6L467.0 734.4L468.0 734.7L469.0 736.2L470.0 736.1L471.0 734.8L472.0 735.2L473.0 733.6L474.0 732.4L475.0 732.1L476.0 732.7L477.0 732.0L478.0 733.9L479.0 733.3L480.0 733.3L481.0 733.1L482.0 733.4L483.0 734.2L484.0 734.4L485.0 733.3L486.0 733.9L487.0 734.9L488.0 734.9L489.0 735.2L490.0 733.9L491.0 734.4L492.0 733.8L493.0 735.5L494.0 735.6L495.0 735.0L496.0 735.3L497.0 733.4L498.0 733.7L499.0 735.1L500.0 734.7L501.0 735.7L502.0 734.0L503.0 734.3L504.0 734.0L505.0 735.5L506.0 734.3L507.0 735.4L508.0 734.5L509.0 733.3L510.0 732.9L511.0 733.4L512.0 731.9L513.0 733.4L514.0 732.7L515.0 732.3L516.0 731.5L517.0 730.6L518.0 731.7L519.0 731.7L520.0 730.7L521.0 731.2L522.0 732.8L523.0 731.2L524.0 731.6L525.0 732.2L526.0 731.5L527.0 733.0L528.0 733.3L529.0 733.2L530.0 733.2L531.0 731.7L532.0 732.7L533.0 733.7L534.0 732.7L535.0 733.1L536.0 731.8L537.0 732.2L538.0 733.7L539.0 733.6L540.0 733.3L541.0 734.1L542.0 734.2L543.0 732.5L544.0 732.3L545.0 733.1L546.0 733.6L547.0 734.7L548.0 732.5L549.0 733.2L550.0 734.4L551.0 735.0L552.0 733.8L553.0 735.0L554.0 733.9L555.0 734.4L556.0 733.5L557.0 734.6L558.0 733.6L559.0 734.6L560.0 735.1L561.0 734.5L562.0 734.7L563.0 733.0L564.0 735.0L565.0 733.9L566.0 733.1L566.5 741.6Z" fill="#729dd5"/><path d="M467.0 757.0L467.0 748.4L468.0 748.4L469.0 749.1L470.0 749.0L471.0 748.4L472.0 747.9L473.0 748.2L474.0 747.3L475.0 747.7L476.0 748.6L477.0 748.7L478.0 746.7L479.0 748.7L480.0 747.6L481.0 748.0L482.0 747.7L483.0 748.4L484.0 749.5L485.0 748.6L486.0 748.5L487.0 748.1L488.0 749.7L489.0 747.8L490.0 747.2L491.0 747.4L492.0 747.8L493.0 745.5L494.0 745.6L495.0 745.3L496.0 744.4L497.0 746.2L498.0 745.8L499.0 746.7L500.0 746.3L501.0 745.5L502.0 748.2L503.0 747.7L504.0 748.9L505.0 749.1L506.0 749.5L507.0 748.4L508.0 748.5L509.0 749.9L510.0 749.8L511.0 748.4L512.0 747.4L513.0 747.8L514.0 749.1L515.0 749.3L516.0 749.0L517.0 749.2L518.0 748.5L519.0 748.1L520.0 747.8L521.0 747.9L522.0 749.1L523.0 747.6L524.0 748.4L525.0 749.8L526.0 747.7L527.0 748.7L528.0 749.3L529.0 748.8L530.0 748.1L531.0 746.8L532.0 747.3L533.0 746.3L534.0 744.6L535.0 744.5L536.0 744.4L537.0 744.7L538.0 745.4L539.0 744.6L540.0 745.7L541.0 747.0L542.0 746.9L543.0 748.7L544.0 749.4L545.0 750.6L546.0 749.7L547.0 749.1L548.0 750.3L549.0 749.7L550.0 749.6L551.0 748.4L552.0 748.8L553.0 748.2L554.0 745.6L555.0 747.5L556.0 745.2L557.0 744.9L558.0 747.0L559.0 746.7L560.0 746.6L561.0 746.5L562.0 745.8L563.0 744.6L564.0 745.6L565.0 744.8L566.0 746.7L566.5 757.0Z" fill="#729dd5"/><rect x="467.0" y="741.6" width="99.5" height="0.8" fill="#3f5a88"/><rect x="572.0" y="726.4" width="35.0" height="30.6" fill="#3f5a88"/><path d="M572.0 741.6L572.0 734.0L573.0 735.0L574.0 733.6L575.0 733.9L576.0 733.7L577.0 734.7L578.0 733.6L579.0 733.4L580.0 733.3L581.0 733.6L582.0 732.8L583.0 733.9L584.0 733.6L585.0 732.2L586.0 733.3L587.0 733.1L588.0 731.3L589.0 731.4L590.0 732.2L591.0 730.5L592.0 730.7L593.0 731.9L594.0 731.6L595.0 730.6L596.0 730.6L597.0 731.4L598.0 732.1L599.0 730.4L600.0 732.5L601.0 731.4L602.0 731.5L603.0 732.5L604.0 731.8L605.0 729.8L606.0 731.1L607.0 730.2L607.0 741.6Z" fill="#729dd5"/><path d="M572.0 757.0L572.0 743.2L573.0 744.1L574.0 744.6L575.0 744.0L576.0 744.5L577.0 744.7L578.0 744.3L579.0 743.4L580.0 742.8L581.0 742.8L582.0 742.5L583.0 743.3L584.0 743.0L585.0 743.5L586.0 742.8L587.0 743.8L588.0 743.8L589.0 744.0L590.0 743.8L591.0 745.5L592.0 743.8L593.0 745.1L594.0 744.2L595.0 744.7L596.0 745.5L597.0 746.8L598.0 745.4L599.0 745.2L600.0 747.6L601.0 747.9L602.0 747.3L603.0 747.9L604.0 746.9L605.0 746.0L606.0 746.4L607.0 747.9L607.0 757.0Z" fill="#729dd5"/><rect x="572.0" y="741.6" width="35.0" height="0.8" fill="#3f5a88"/><rect x="616.0" y="726.4" width="84.5" height="30.6" fill="#3f5a88"/><path d="M616.0 741.6L616.0 733.5L617.0 733.8L618.0 735.1L619.0 734.5L620.0 734.1L621.0 733.2L622.0 733.4L623.0 731.8L624.0 731.8L625.0 731.5L626.0 732.3L627.0 732.1L628.0 731.2L629.0 733.1L630.0 733.4L631.0 733.9L632.0 734.9L633.0 733.6L634.0 734.6L635.0 735.5L636.0 734.5L637.0 735.1L638.0 735.4L639.0 735.2L640.0 734.4L641.0 734.6L642.0 733.4L643.0 732.2L644.0 733.0L645.0 733.1L646.0 731.7L647.0 731.8L648.0 732.8L649.0 731.5L650.0 732.1L651.0 732.2L652.0 731.5L653.0 731.3L654.0 731.9L655.0 732.8L656.0 731.8L657.0 731.3L658.0 733.0L659.0 733.3L660.0 732.5L661.0 733.0L662.0 734.3L663.0 732.5L664.0 733.7L665.0 734.5L666.0 734.0L667.0 733.6L668.0 734.2L669.0 733.9L670.0 731.7L671.0 732.2L672.0 732.0L673.0 731.2L674.0 731.5L675.0 731.2L676.0 730.0L677.0 730.6L678.0 730.5L679.0 730.9L680.0 732.4L681.0 733.6L682.0 733.1L683.0 733.5L684.0 734.4L685.0 734.1L686.0 735.2L687.0 734.7L688.0 733.8L689.0 733.3L690.0 734.5L691.0 733.8L692.0 734.2L693.0 735.0L694.0 735.5L695.0 733.4L696.0 733.2L697.0 735.4L698.0 735.3L699.0 734.5L700.0 733.9L700.5 741.6Z" fill="#729dd5"/><path d="M616.0 757.0L616.0 745.8L617.0 747.8L618.0 746.3L619.0 747.1L620.0 744.6L621.0 744.4L622.0 743.5L623.0 743.4L624.0 743.7L625.0 744.0L626.0 743.8L627.0 743.2L628.0 744.0L629.0 744.2L630.0 744.0L631.0 745.4L632.0 745.0L633.0 743.5L634.0 745.2L635.0 745.9L636.0 745.5L637.0 745.5L638.0 745.3L639.0 746.3L640.0 745.6L641.0 745.5L642.0 746.1L643.0 748.0L644.0 747.4L645.0 747.6L646.0 747.8L647.0 747.6L648.0 745.9L649.0 747.0L650.0 746.4L651.0 745.4L652.0 746.2L653.0 743.8L654.0 745.4L655.0 745.3L656.0 743.5L657.0 745.5L658.0 744.5L659.0 744.5L660.0 744.7L661.0 744.6L662.0 742.8L663.0 742.0L664.0 741.5L665.0 743.2L666.0 742.9L667.0 741.9L668.0 744.3L669.0 742.9L670.0 745.5L671.0 746.0L672.0 746.4L673.0 747.2L674.0 746.5L675.0 747.8L676.0 748.3L677.0 748.7L678.0 747.7L679.0 747.1L680.0 747.8L681.0 748.5L682.0 748.2L683.0 749.0L684.0 748.3L685.0 747.5L686.0 747.4L687.0 747.9L688.0 746.8L689.0 747.2L690.0 747.3L691.0 745.1L692.0 745.5L693.0 745.5L694.0 743.8L695.0 743.9L696.0 743.1L697.0 743.3L698.0 743.5L699.0 743.1L700.0 744.1L700.5 757.0Z" fill="#729dd5"/><rect x="616.0" y="741.6" width="84.5" height="0.8" fill="#3f5a88"/><rect x="710.0" y="726.4" width="41.0" height="30.6" fill="#3f5a88"/><path d="M710.0 741.6L710.0 732.2L711.0 731.6L712.0 731.0L713.0 732.2L714.0 731.1L715.0 732.7L716.0 733.0L717.0 732.1L718.0 734.1L719.0 734.8L720.0 734.4L721.0 732.5L722.0 733.1L723.0 733.0L724.0 732.7L725.0 733.1L726.0 734.2L727.0 733.3L728.0 732.2L729.0 732.7L730.0 732.5L731.0 733.9L732.0 733.4L733.0 731.6L734.0 731.2L735.0 732.9L736.0 731.4L737.0 732.2L738.0 730.4L739.0 732.4L740.0 730.3L741.0 732.2L742.0 731.3L743.0 731.9L744.0 732.9L745.0 732.8L746.0 731.1L747.0 733.4L748.0 733.2L749.0 733.1L750.0 732.1L751.0 733.7L751.0 741.6Z" fill="#729dd5"/><path d="M710.0 757.0L710.0 745.4L711.0 746.7L712.0 746.5L713.0 746.1L714.0 747.1L715.0 747.5L716.0 746.6L717.0 747.2L718.0 746.5L719.0 748.6L720.0 747.0L721.0 748.9L722.0 747.3L723.0 747.7L724.0 749.2L725.0 747.4L726.0 749.0L727.0 748.6L728.0 748.4L729.0 748.0L730.0 748.4L731.0 746.9L732.0 747.7L733.0 748.4L734.0 748.5L735.0 746.6L736.0 746.2L737.0 746.3L738.0 746.5L739.0 747.2L740.0 745.0L741.0 744.9L742.0 745.7L743.0 744.7L744.0 745.6L745.0 745.2L746.0 743.9L747.0 745.3L748.0 745.3L749.0 744.5L750.0 745.2L751.0 744.4L751.0 757.0Z" fill="#729dd5"/><rect x="710.0" y="741.6" width="41.0" height="0.8" fill="#3f5a88"/><rect x="774.0" y="726.4" width="247.5" height="30.6" fill="#3f5a88"/><path d="M774.0 741.6L774.0 735.5L775.0 734.6L776.0 735.8L777.0 734.5L778.0 734.4L779.0 736.6L780.0 734.7L781.0 734.6L782.0 735.2L783.0 736.3L784.0 735.9L785.0 735.9L786.0 734.9L787.0 734.6L788.0 735.5L789.0 735.6L790.0 735.5L791.0 734.1L792.0 734.6L793.0 733.1L794.0 734.4L795.0 734.2L796.0 733.6L797.0 733.3L798.0 733.5L799.0 733.7L800.0 735.0L801.0 735.8L802.0 734.9L803.0 735.0L804.0 735.1L805.0 736.2L806.0 735.3L807.0 734.3L808.0 734.2L809.0 734.3L810.0 733.2L811.0 734.0L812.0 734.1L813.0 733.4L814.0 733.0L815.0 733.7L816.0 734.3L817.0 733.7L818.0 732.3L819.0 734.0L820.0 734.0L821.0 731.9L822.0 733.4L823.0 731.7L824.0 733.0L825.0 732.9L826.0 732.7L827.0 732.8L828.0 732.9L829.0 733.0L830.0 732.1L831.0 732.6L832.0 733.1L833.0 733.3L834.0 733.3L835.0 732.3L836.0 733.7L837.0 733.7L838.0 733.5L839.0 733.6L840.0 732.6L841.0 732.1L842.0 733.4L843.0 733.1L844.0 733.0L845.0 732.4L846.0 732.6L847.0 733.5L848.0 732.0L849.0 733.6L850.0 732.9L851.0 733.3L852.0 734.6L853.0 733.6L854.0 732.8L855.0 733.4L856.0 734.7L857.0 734.1L858.0 732.9L859.0 735.2L860.0 734.3L861.0 734.7L862.0 735.0L863.0 735.7L864.0 734.5L865.0 735.6L866.0 735.2L867.0 735.4L868.0 735.9L869.0 735.8L870.0 736.3L871.0 735.7L872.0 736.3L873.0 734.7L874.0 735.3L875.0 734.0L876.0 735.8L877.0 734.0L878.0 733.4L879.0 734.0L880.0 732.7L881.0 733.5L882.0 732.7L883.0 733.1L884.0 731.7L885.0 731.7L886.0 732.1L887.0 733.0L888.0 731.3L889.0 731.0L890.0 730.9L891.0 731.0L892.0 730.7L893.0 731.0L894.0 731.8L895.0 731.9L896.0 731.8L897.0 732.6L898.0 733.1L899.0 732.7L900.0 733.3L901.0 733.4L902.0 733.9L903.0 733.1L904.0 734.3L905.0 733.4L906.0 733.3L907.0 733.2L908.0 732.9L909.0 732.6L910.0 733.4L911.0 732.6L912.0 732.3L913.0 733.2L914.0 732.6L915.0 733.7L916.0 733.4L917.0 732.7L918.0 731.6L919.0 732.0L920.0 731.2L921.0 731.3L922.0 731.5L923.0 731.2L924.0 731.6L925.0 732.1L926.0 731.7L927.0 731.4L928.0 733.2L929.0 732.1L930.0 732.3L931.0 734.7L932.0 734.8L933.0 733.5L934.0 735.1L935.0 734.4L936.0 733.7L937.0 733.6L938.0 732.8L939.0 731.1L940.0 731.6L941.0 730.6L942.0 728.9L943.0 728.7L944.0 728.3L945.0 729.7L946.0 729.5L947.0 729.9L948.0 730.0L949.0 731.7L950.0 731.4L951.0 732.5L952.0 733.1L953.0 733.0L954.0 732.5L955.0 733.7L956.0 733.4L957.0 732.9L958.0 732.8L959.0 730.0L960.0 730.5L961.0 730.7L962.0 729.7L963.0 727.9L964.0 729.8L965.0 730.0L966.0 730.5L967.0 730.1L968.0 729.9L969.0 731.7L970.0 731.8L971.0 731.7L972.0 733.8L973.0 734.6L974.0 734.0L975.0 734.2L976.0 733.3L977.0 733.8L978.0 732.3L979.0 731.5L980.0 731.1L981.0 730.8L982.0 730.4L983.0 729.2L984.0 730.8L985.0 730.0L986.0 731.5L987.0 731.9L988.0 730.8L989.0 732.6L990.0 733.3L991.0 733.7L992.0 733.0L993.0 733.4L994.0 735.8L995.0 735.7L996.0 735.0L997.0 735.0L998.0 736.4L999.0 735.7L1000.0 735.5L1001.0 736.6L1002.0 735.2L1003.0 737.4L1004.0 735.7L1005.0 738.2L1006.0 737.1L1007.0 738.1L1008.0 737.6L1009.0 738.5L1010.0 738.6L1011.0 739.3L1012.0 740.4L1013.0 739.2L1014.0 739.5L1015.0 740.7L1016.0 741.2L1017.0 739.2L1018.0 741.3L1019.0 740.2L1020.0 739.6L1021.0 740.7L1021.5 741.6Z" fill="#729dd5"/><path d="M774.0 757.0L774.0 747.9L775.0 749.9L776.0 749.3L777.0 749.4L778.0 748.4L779.0 748.2L780.0 747.4L781.0 749.0L782.0 748.0L783.0 748.3L784.0 747.1L785.0 748.3L786.0 749.1L787.0 750.2L788.0 748.1L789.0 748.5L790.0 749.9L791.0 750.8L792.0 751.6L793.0 750.0L794.0 752.2L795.0 750.0L796.0 749.7L797.0 751.7L798.0 750.0L799.0 750.1L800.0 751.1L801.0 750.0L802.0 751.0L803.0 750.2L804.0 750.1L805.0 751.4L806.0 750.6L807.0 750.3L808.0 751.2L809.0 749.9L810.0 750.0L811.0 748.6L812.0 748.5L813.0 749.8L814.0 749.2L815.0 747.6L816.0 749.4L817.0 748.2L818.0 746.9L819.0 748.5L820.0 748.2L821.0 748.2L822.0 746.6L823.0 747.7L824.0 746.9L825.0 746.7L826.0 747.1L827.0 745.4L828.0 747.2L829.0 745.7L830.0 747.5L831.0 745.4L832.0 745.9L833.0 746.5L834.0 746.3L835.0 747.6L836.0 746.5L837.0 747.6L838.0 747.3L839.0 746.6L840.0 747.6L841.0 747.9L842.0 747.6L843.0 748.4L844.0 748.0L845.0 746.7L846.0 747.2L847.0 747.9L848.0 747.7L849.0 747.0L850.0 747.2L851.0 747.3L852.0 746.5L853.0 748.0L854.0 746.7L855.0 747.4L856.0 747.8L857.0 747.5L858.0 748.2L859.0 746.7L860.0 747.4L861.0 748.4L862.0 747.1L863.0 747.3L864.0 749.6L865.0 748.8L866.0 748.8L867.0 747.5L868.0 746.1L869.0 745.9L870.0 745.2L871.0 745.2L872.0 744.6L873.0 746.1L874.0 744.3L875.0 743.8L876.0 743.6L877.0 744.8L878.0 744.3L879.0 743.4L880.0 743.8L881.0 744.7L882.0 742.4L883.0 744.3L884.0 744.2L885.0 743.0L886.0 744.0L887.0 742.7L888.0 743.3L889.0 745.2L890.0 746.2L891.0 745.5L892.0 748.0L893.0 748.2L894.0 748.6L895.0 747.3L896.0 746.0L897.0 747.3L898.0 745.0L899.0 745.9L900.0 744.6L901.0 743.9L902.0 743.9L903.0 743.0L904.0 740.9L905.0 741.0L906.0 741.4L907.0 743.2L908.0 741.5L909.0 741.6L910.0 741.8L911.0 740.6L912.0 740.8L913.0 742.3L914.0 742.0L915.0 741.3L916.0 742.2L917.0 740.6L918.0 742.6L919.0 744.4L920.0 743.4L921.0 745.0L922.0 745.4L923.0 745.4L924.0 745.9L925.0 746.2L926.0 744.9L927.0 744.1L928.0 745.2L929.0 744.8L930.0 744.4L931.0 745.0L932.0 743.6L933.0 745.4L934.0 744.4L935.0 744.6L936.0 744.0L937.0 745.1L938.0 745.0L939.0 745.1L940.0 745.3L941.0 747.2L942.0 748.4L943.0 747.1L944.0 748.8L945.0 747.6L946.0 747.8L947.0 745.4L948.0 746.7L949.0 746.3L950.0 745.5L951.0 743.8L952.0 743.1L953.0 742.8L954.0 741.5L955.0 742.6L956.0 741.0L957.0 741.2L958.0 741.5L959.0 741.3L960.0 740.8L961.0 740.2L962.0 740.6L963.0 741.3L964.0 742.0L965.0 741.7L966.0 742.3L967.0 740.3L968.0 742.8L969.0 741.4L970.0 741.4L971.0 742.8L972.0 742.3L973.0 743.8L974.0 743.4L975.0 741.9L976.0 742.3L977.0 743.9L978.0 741.7L979.0 741.4L980.0 743.1L981.0 742.5L982.0 741.0L983.0 742.9L984.0 740.5L985.0 742.6L986.0 742.2L987.0 743.8L988.0 744.7L989.0 744.1L990.0 745.8L991.0 746.2L992.0 747.0L993.0 745.2L994.0 746.3L995.0 745.9L996.0 747.3L997.0 747.1L998.0 748.0L999.0 748.8L1000.0 749.8L1001.0 748.9L1002.0 750.3L1003.0 751.2L1004.0 750.8L1005.0 751.2L1006.0 752.3L1007.0 752.0L1008.0 752.9L1009.0 752.5L1010.0 753.5L1011.0 754.5L1012.0 753.0L1013.0 753.5L1014.0 756.4L1015.0 755.0L1016.0 755.0L1017.0 755.2L1018.0 755.2L1019.0 755.7L1020.0 755.3L1021.0 756.3L1021.5 757.0Z" fill="#729dd5"/><rect x="774.0" y="741.6" width="247.5" height="0.8" fill="#3f5a88"/><rect x="151.0" y="726.4" width="1.1" height="30.6" fill="#5f7aa6"/><rect x="291.0" y="726.4" width="1.1" height="30.6" fill="#5f7aa6"/><rect x="421.0" y="726.4" width="1.1" height="30.6" fill="#5f7aa6"/><rect x="426.5" y="726.4" width="1.1" height="30.6" fill="#5f7aa6"/><rect x="596.0" y="726.4" width="1.1" height="30.6" fill="#5f7aa6"/><rect x="671.0" y="726.4" width="1.1" height="30.6" fill="#5f7aa6"/><rect x="465.0" y="726.4" width="2.0" height="30.6" fill="#1b1b1b"/><rect x="35.5" y="734.7" width="12.5" height="15.3" fill="#b9a57c" stroke="#8d8268" stroke-width=".8"/><rect x="205.5" y="734.7" width="9.8" height="15.3" fill="#b9a57c" stroke="#8d8268" stroke-width=".8"/><rect x="287.5" y="734.7" width="13.5" height="15.3" fill="#b9a57c" stroke="#8d8268" stroke-width=".8"/><rect x="371.5" y="734.7" width="11.5" height="15.3" fill="#b9a57c" stroke="#8d8268" stroke-width=".8"/><rect x="401.0" y="734.7" width="11.0" height="15.3" fill="#b9a57c" stroke="#8d8268" stroke-width=".8"/><rect x="454.0" y="734.7" width="11.0" height="15.3" fill="#b9a57c" stroke="#8d8268" stroke-width=".8"/><rect x="467.0" y="734.7" width="5.0" height="15.3" fill="#b9a57c" stroke="#8d8268" stroke-width=".8"/><rect x="46.5" y="758.0" width="55.5" height="62.0" fill="#3f5a88"/><path d="M46.5 789.0L46.5 776.9L47.5 774.2L48.5 773.3L49.5 775.2L50.5 773.3L51.5 775.1L52.5 774.4L53.5 773.3L54.5 775.8L55.5 776.3L56.5 775.6L57.5 776.0L58.5 774.5L59.5 775.7L60.5 776.0L61.5 775.5L62.5 775.4L63.5 774.0L64.5 777.2L65.5 775.1L66.5 774.1L67.5 774.6L68.5 776.6L69.5 776.5L70.5 775.7L71.5 776.9L72.5 773.5L73.5 774.2L74.5 774.0L75.5 774.6L76.5 773.4L77.5 775.5L78.5 776.7L79.5 775.4L80.5 775.0L81.5 773.6L82.5 776.3L83.5 773.3L84.5 775.0L85.5 776.2L86.5 774.3L87.5 773.4L88.5 774.2L89.5 773.5L90.5 774.2L91.5 774.1L92.5 775.1L93.5 771.9L94.5 772.8L95.5 774.4L96.5 774.4L97.5 773.5L98.5 773.3L99.5 772.7L100.5 774.8L101.5 774.6L102.0 789.0Z" fill="#729dd5"/><path d="M46.5 820.0L46.5 807.6L47.5 806.7L48.5 807.1L49.5 806.3L50.5 808.8L51.5 806.9L52.5 807.2L53.5 807.5L54.5 805.2L55.5 806.8L56.5 804.3L57.5 806.3L58.5 805.6L59.5 805.0L60.5 805.1L61.5 807.9L62.5 805.8L63.5 808.2L64.5 807.5L65.5 808.5L66.5 806.7L67.5 807.9L68.5 807.4L69.5 805.6L70.5 805.2L71.5 803.9L72.5 803.1L73.5 801.7L74.5 800.4L75.5 799.8L76.5 801.0L77.5 800.9L78.5 801.1L79.5 802.1L80.5 800.8L81.5 803.3L82.5 800.7L83.5 802.5L84.5 801.8L85.5 802.2L86.5 804.6L87.5 803.6L88.5 803.9L89.5 805.0L90.5 803.1L91.5 804.5L92.5 803.9L93.5 806.3L94.5 803.4L95.5 805.6L96.5 804.4L97.5 804.9L98.5 807.7L99.5 805.8L100.5 806.3L101.5 806.5L102.0 820.0Z" fill="#729dd5"/><rect x="46.5" y="789.0" width="55.5" height="1.2" fill="#3f5a88"/><rect x="103.0" y="758.0" width="34.0" height="62.0" fill="#3f5a88"/><path d="M103.0 789.0L103.0 767.5L104.0 769.1L105.0 770.5L106.0 767.6L107.0 769.3L108.0 767.8L109.0 770.2L110.0 769.6L111.0 766.8L112.0 767.5L113.0 770.6L114.0 769.6L115.0 770.6L116.0 772.2L117.0 773.8L118.0 774.1L119.0 775.8L120.0 776.6L121.0 775.1L122.0 777.5L123.0 778.2L124.0 778.1L125.0 779.3L126.0 776.7L127.0 778.2L128.0 777.9L129.0 776.9L130.0 780.2L131.0 778.8L132.0 779.4L133.0 778.7L134.0 779.6L135.0 780.5L136.0 781.9L137.0 780.8L137.0 789.0Z" fill="#729dd5"/><path d="M103.0 820.0L103.0 797.7L104.0 800.5L105.0 798.8L106.0 800.9L107.0 799.8L108.0 801.5L109.0 801.0L110.0 801.3L111.0 803.8L112.0 801.7L113.0 804.0L114.0 803.1L115.0 802.0L116.0 802.6L117.0 802.1L118.0 803.6L119.0 802.8L120.0 803.9L121.0 802.9L122.0 804.3L123.0 802.0L124.0 804.7L125.0 804.0L126.0 804.7L127.0 805.5L128.0 804.4L129.0 805.7L130.0 805.7L131.0 808.2L132.0 808.8L133.0 809.6L134.0 807.6L135.0 808.9L136.0 811.3L137.0 810.7L137.0 820.0Z" fill="#729dd5"/><rect x="103.0" y="789.0" width="34.0" height="1.2" fill="#3f5a88"/><rect x="46.5" y="794.3" width="55.5" height="1.2" fill="#9fa6a8"/><rect x="103.0" y="801.0" width="34.0" height="1.3" fill="#b5bcc2"/><rect x="102.0" y="775.0" width="1.2" height="30.0" fill="#b5a27c"/><rect x="253.0" y="758.0" width="7.0" height="62.0" fill="#1d7b55"/><rect x="253.0" y="770.0" width="7.0" height="18.0" fill="#2fd19b"/><rect x="253.0" y="803.0" width="7.0" height="17.0" fill="#2fd19b"/><rect x="253.0" y="790.5" width="7.0" height="4.5" fill="#1a6a49"/><rect x="253.0" y="783.0" width="7.0" height="1.2" fill="#7fe3c0"/><rect x="419.5" y="758.0" width="7.5" height="62.0" fill="#1d7b55"/><rect x="419.5" y="770.0" width="7.5" height="18.0" fill="#2fd19b"/><rect x="419.5" y="803.0" width="7.5" height="17.0" fill="#2fd19b"/><rect x="419.5" y="790.5" width="7.5" height="4.5" fill="#1a6a49"/><rect x="419.5" y="783.0" width="7.5" height="1.2" fill="#7fe3c0"/><rect x="567.0" y="758.0" width="11.5" height="62.0" fill="#3f5a88"/><path d="M567.0 789.0L567.0 769.7L568.0 773.4L569.0 769.9L570.0 770.6L571.0 768.5L572.0 771.7L573.0 767.3L574.0 769.3L575.0 769.1L576.0 766.2L577.0 768.0L578.0 765.7L578.5 789.0Z" fill="#729dd5"/><path d="M567.0 820.0L567.0 804.2L568.0 806.1L569.0 805.2L570.0 804.1L571.0 805.8L572.0 808.9L573.0 808.8L574.0 810.1L575.0 810.1L576.0 806.7L577.0 809.9L578.0 808.5L578.5 820.0Z" fill="#729dd5"/><rect x="567.0" y="789.0" width="11.5" height="6.0" fill="#3f5a88"/><rect x="567.0" y="799.5" width="11.5" height="1.2" fill="#d8d8d8"/><rect x="701.0" y="758.0" width="13.0" height="62.0" fill="#3f5a88"/><path d="M701.0 789.0L701.0 767.9L702.0 766.8L703.0 767.4L704.0 766.9L705.0 768.1L706.0 764.0L707.0 767.4L708.0 765.1L709.0 762.7L710.0 762.2L711.0 765.5L712.0 762.8L713.0 762.9L714.0 765.5L714.0 789.0Z" fill="#729dd5"/><path d="M701.0 820.0L701.0 802.4L702.0 801.4L703.0 804.2L704.0 802.6L705.0 801.2L706.0 802.7L707.0 806.4L708.0 803.6L709.0 806.5L710.0 807.2L711.0 804.5L712.0 803.6L713.0 803.9L714.0 803.5L714.0 820.0Z" fill="#729dd5"/><rect x="701.0" y="789.0" width="13.0" height="6.0" fill="#3f5a88"/><rect x="701.0" y="801.5" width="13.0" height="1.2" fill="#d8d8d8"/><rect x="573.0" y="775.0" width="5.5" height="29.0" fill="#b9a57c" stroke="#8d8268" stroke-width=".6"/><rect x="712.8" y="776.0" width="1.2" height="27.0" fill="#b9a57c"/><g fill="#d9d9d9"><path d="M48.3 694.0h4.5l-4.5 4.5z"/><path d="M30.2 726.4h4.5l-4.5 4.5z"/><path d="M140.0 726.4h4.5l-4.5 4.5z"/><path d="M419.5 758.0h4.5l-4.5 4.5z"/><path d="M710.0 726.4h4.5l-4.5 4.5z"/><path d="M774.0 726.4h4.5l-4.5 4.5z"/><path d="M17.5 675.0h-4.5l4.5 4.5z"/><path d="M17.5 694.0h-4.5l4.5 4.5z"/><path d="M1021.5 726.4h-4.5l4.5 4.5z"/></g><path d="M263.6 526.5h10.4v6.5l-5.2 4.5l-5.2-4.5z" fill="#3b8df0"/><rect x="268.0" y="537.0" width="1.2" height="296.0" fill="#3b86dc"/></svg>
<div class="a tl" style="left:-16.5px">00:09:00:00</div>
<div class="a tl" style="left:70.0px">00:10:00:00</div>
<div class="a tl" style="left:156.5px">00:11:00:00</div>
<div class="a tl" style="left:243.0px">00:12:00:00</div>
<div class="a tl" style="left:329.5px">00:13:00:00</div>
<div class="a tl" style="left:416.0px">00:14:00:00</div>
<div class="a tl" style="left:502.5px">00:15:00:00</div>
<div class="a tl" style="left:589.0px">00:16:00:00</div>
<div class="a tl" style="left:675.5px">00:17:00:00</div>
<div class="a tl" style="left:762.0px">00:18:00:00</div>
<div class="a tl" style="left:848.5px">00:19:00:00</div>
<div class="a tl" style="left:935.0px">00:20:00:00</div>
<div class="a fx" style="left:36.0px;top:648.4px;background:#f0c632;color:#80600f">fx</div>
<div class="a cl" style="left:54.0px;top:647.2px">azul</div>
<div class="a fx" style="left:229.5px;top:648.4px;background:#f0c632;color:#80600f">fx</div>
<div class="a cl" style="left:247.5px;top:647.2px">Cafe</div>
<div class="a fx" style="left:391.0px;top:648.4px;background:#f0c632;color:#80600f">fx</div>
<div class="a cl" style="left:409.0px;top:647.2px">morado</div>
<div class="a fx" style="left:504.0px;top:648.4px;background:#f0c632;color:#80600f">fx</div>
<div class="a cl" style="left:522.0px;top:647.2px">azul</div>
<div class="a fx" style="left:621.0px;top:648.4px;background:#f0c632;color:#80600f">fx</div>
<div class="a cl" style="left:639.0px;top:647.2px">Cafe</div>
<div class="a fx" style="left:682.5px;top:648.4px;background:#f0c632;color:#80600f">fx</div>
<div class="a cl" style="left:700.5px;top:647.2px">Cafe</div>
<div class="a fx" style="left:59.3px;top:664.1px;background:#1a8f1a;color:#0c5c0c;width:9.8px;height:8.6px;font-size:8.8px;line-height:8.2px">fx</div>
<div class="a fx" style="left:178.8px;top:664.1px;background:#1a8f1a;color:#0c5c0c;width:9.8px;height:8.6px;font-size:8.8px;line-height:8.2px">fx</div>
<div class="a cl" style="left:196.1px;top:662.2px">trans</div>
<div class="a fx" style="left:245.3px;top:664.1px;background:#1a8f1a;color:#0c5c0c;width:9.8px;height:8.6px;font-size:8.8px;line-height:8.2px">fx</div>
<div class="a fx" style="left:305.3px;top:664.1px;background:#1a8f1a;color:#0c5c0c;width:9.8px;height:8.6px;font-size:8.8px;line-height:8.2px">fx</div>
<div class="a cl" style="left:322.6px;top:662.2px">trans</div>
<div class="a fx" style="left:417.3px;top:664.1px;background:#1a8f1a;color:#0c5c0c;width:9.8px;height:8.6px;font-size:8.8px;line-height:8.2px">fx</div>
<div class="a fx" style="left:583.3px;top:664.1px;background:#1a8f1a;color:#0c5c0c;width:9.8px;height:8.6px;font-size:8.8px;line-height:8.2px">fx</div>
<div class="a fx" style="left:945.3px;top:664.1px;background:#1a8f1a;color:#0c5c0c;width:9.8px;height:8.6px;font-size:8.8px;line-height:8.2px">fx</div>
<div class="a cl" style="left:962.6px;top:662.2px">transparente 1</div>
<div class="a fx" style="left:36.8px;top:678.7px;background:#1a8f1a;color:#0c5c0c;width:9.8px;height:8.6px;font-size:8.8px;line-height:8.2px">fx</div>
<div class="a cl" style="left:54.5px;top:677.0px">Papel antiguo</div>
<div class="a fx" style="left:762.6px;top:678.7px;background:#1a8f1a;color:#0c5c0c;width:9.8px;height:8.6px;font-size:8.8px;line-height:8.2px">fx</div>
<div class="a cl" style="left:780.5px;top:677.0px">Papel acuarela</div>
<div class="a cl" style="left:988px;top:649.5px;height:7px;overflow:hidden;line-height:11px">Disolu</div>
<div class="a cl" style="left:-0.5px;top:676.3px;color:#1c2a44;font-size:11px">V]</div>
<div class="a fx" style="left:58.6px;top:697.0px;background:#6b6b6b;color:#3a3a3a;box-shadow:0 0 0 1px #8f8f8f inset">fx</div>
<div class="a fx" style="left:150.6px;top:697.0px;background:#6b6b6b;color:#3a3a3a;box-shadow:0 0 0 1px #8f8f8f inset">fx</div>
<div class="a fx" style="left:682.3px;top:697.0px;background:#6b6b6b;color:#3a3a3a;box-shadow:0 0 0 1px #8f8f8f inset">fx</div>
<div class="a cl" style="left:38.0px;top:736.6px;color:#2a2418;font-size:8.4px;width:9.5px;overflow:hidden">Pc</div>
<div class="a cl" style="left:208.5px;top:736.6px;color:#2a2418;font-size:8.4px;width:8.0px;overflow:hidden">P</div>
<div class="a cl" style="left:294.5px;top:736.6px;color:#2a2418;font-size:8.4px;width:8.0px;overflow:hidden">P</div>
<div class="a cl" style="left:374.0px;top:736.6px;color:#2a2418;font-size:8.4px;width:9.5px;overflow:hidden">Pc</div>
<div class="a cl" style="left:404.5px;top:736.6px;color:#2a2418;font-size:8.4px;width:8.0px;overflow:hidden">P</div>
<div class="a cl" style="left:457.0px;top:736.6px;color:#2a2418;font-size:8.4px;width:8.0px;overflow:hidden">P</div>
<div class="a fx" style="left:161.0px;top:729.0px;background:#f0c632;color:#80600f">fx</div>
<div class="a fx" style="left:228.0px;top:729.0px;background:#f0c632;color:#80600f">fx</div>
<div class="a fx" style="left:311.0px;top:729.0px;background:#f0c632;color:#80600f">fx</div>
<div class="a fx" style="left:482.0px;top:729.0px;background:#f0c632;color:#80600f">fx</div>
<div class="a fx" style="left:627.0px;top:729.0px;background:#f0c632;color:#80600f">fx</div>
<div class="a fx" style="left:682.0px;top:729.0px;background:#f0c632;color:#80600f">fx</div>
<div class="a fx" style="left:720.0px;top:729.0px;background:#f0c632;color:#80600f">fx</div>
<div class="a fx" style="left:784.0px;top:729.0px;background:#f0c632;color:#80600f">fx</div>
<div class="a fx" style="left:56.0px;top:761.4px;background:#f0c632;color:#80600f">fx</div>
<div class="a fx" style="left:112.8px;top:761.4px;background:#f0c632;color:#80600f">fx</div>
</body></html>
